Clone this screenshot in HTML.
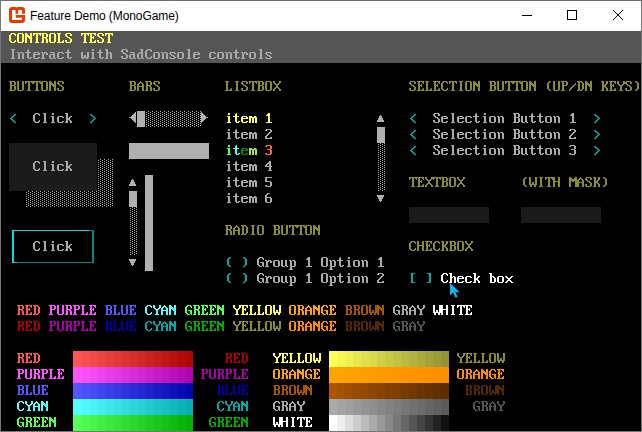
<!DOCTYPE html>
<html><head><meta charset="utf-8"><style>
html,body{margin:0;padding:0;background:#fff;}
body{width:642px;height:432px;position:relative;overflow:hidden;}
#win{position:absolute;left:0;top:0;width:640px;height:430px;border:1px solid #777;border-top-color:#6e6e6e;background:#fff;}
#title{position:absolute;left:30px;top:9px;font-family:"Liberation Sans",sans-serif;font-size:12px;letter-spacing:-0.09px;color:#000;white-space:nowrap;line-height:14px;}
#con{position:absolute;left:1px;top:31px;width:640px;height:400px;background:#000;}
svg{display:block;}
</style></head><body>
<div id="win"></div>
<svg style="position:absolute;left:9px;top:7px" width="16" height="16" viewBox="0 0 16 16">
<path fill="#e73c00" d="M3 0h3.3l1.2 0.4l1.2-0.4h4.3a3 3 0 0 1 3 3v10a3 3 0 0 1-3 3H3a3 3 0 0 1-3-3V3a3 3 0 0 1 3-3z"/>
<path fill="#fff" d="M3 3V13H13V10.7H6.7V8H16V6.7H13V3H9.3V6.7H6.5V3Z"/>
</svg>
<div id="title">Feature Demo (MonoGame)</div>
<svg style="position:absolute;left:0;top:0" width="642" height="31">
<rect x="522" y="15" width="10" height="1" fill="#000"/>
<rect x="567.5" y="10.5" width="9" height="9" fill="none" stroke="#000" stroke-width="1"/>
<path d="M613 10l10 10M623 10l-10 10" stroke="#000" stroke-width="1" fill="none"/>
</svg>
<div id="con">
<svg width="640" height="400" shape-rendering="crispEdges">
<rect x="0" y="0" width="640" height="32" fill="#555555"/>
<rect x="8" y="112" width="88" height="48" fill="#1b1b1b"/>
<rect x="408" y="176" width="80" height="16" fill="#1b1b1b"/>
<rect x="520" y="176" width="80" height="16" fill="#1b1b1b"/>
<rect x="72" y="320" width="8" height="16" fill="#ff5555"/>
<rect x="80" y="320" width="8" height="16" fill="#f94f4f"/>
<rect x="88" y="320" width="8" height="16" fill="#f44a4a"/>
<rect x="96" y="320" width="8" height="16" fill="#ee4444"/>
<rect x="104" y="320" width="8" height="16" fill="#e83e3e"/>
<rect x="112" y="320" width="8" height="16" fill="#e33939"/>
<rect x="120" y="320" width="8" height="16" fill="#dd3333"/>
<rect x="128" y="320" width="8" height="16" fill="#d72d2d"/>
<rect x="136" y="320" width="8" height="16" fill="#d22828"/>
<rect x="144" y="320" width="8" height="16" fill="#cc2222"/>
<rect x="152" y="320" width="8" height="16" fill="#c61c1c"/>
<rect x="160" y="320" width="8" height="16" fill="#c11717"/>
<rect x="168" y="320" width="8" height="16" fill="#bb1111"/>
<rect x="176" y="320" width="8" height="16" fill="#b50b0b"/>
<rect x="184" y="320" width="8" height="16" fill="#b00606"/>
<rect x="72" y="336" width="8" height="16" fill="#ff55ff"/>
<rect x="80" y="336" width="8" height="16" fill="#f94ff9"/>
<rect x="88" y="336" width="8" height="16" fill="#f44af4"/>
<rect x="96" y="336" width="8" height="16" fill="#ee44ee"/>
<rect x="104" y="336" width="8" height="16" fill="#e83ee8"/>
<rect x="112" y="336" width="8" height="16" fill="#e339e3"/>
<rect x="120" y="336" width="8" height="16" fill="#dd33dd"/>
<rect x="128" y="336" width="8" height="16" fill="#d72dd7"/>
<rect x="136" y="336" width="8" height="16" fill="#d228d2"/>
<rect x="144" y="336" width="8" height="16" fill="#cc22cc"/>
<rect x="152" y="336" width="8" height="16" fill="#c61cc6"/>
<rect x="160" y="336" width="8" height="16" fill="#c117c1"/>
<rect x="168" y="336" width="8" height="16" fill="#bb11bb"/>
<rect x="176" y="336" width="8" height="16" fill="#b50bb5"/>
<rect x="184" y="336" width="8" height="16" fill="#b006b0"/>
<rect x="72" y="352" width="8" height="16" fill="#5555ff"/>
<rect x="80" y="352" width="8" height="16" fill="#4f4ff9"/>
<rect x="88" y="352" width="8" height="16" fill="#4a4af4"/>
<rect x="96" y="352" width="8" height="16" fill="#4444ee"/>
<rect x="104" y="352" width="8" height="16" fill="#3e3ee8"/>
<rect x="112" y="352" width="8" height="16" fill="#3939e3"/>
<rect x="120" y="352" width="8" height="16" fill="#3333dd"/>
<rect x="128" y="352" width="8" height="16" fill="#2d2dd7"/>
<rect x="136" y="352" width="8" height="16" fill="#2828d2"/>
<rect x="144" y="352" width="8" height="16" fill="#2222cc"/>
<rect x="152" y="352" width="8" height="16" fill="#1c1cc6"/>
<rect x="160" y="352" width="8" height="16" fill="#1717c1"/>
<rect x="168" y="352" width="8" height="16" fill="#1111bb"/>
<rect x="176" y="352" width="8" height="16" fill="#0b0bb5"/>
<rect x="184" y="352" width="8" height="16" fill="#0606b0"/>
<rect x="72" y="368" width="8" height="16" fill="#55ffff"/>
<rect x="80" y="368" width="8" height="16" fill="#4ff9f9"/>
<rect x="88" y="368" width="8" height="16" fill="#4af4f4"/>
<rect x="96" y="368" width="8" height="16" fill="#44eeee"/>
<rect x="104" y="368" width="8" height="16" fill="#3ee8e8"/>
<rect x="112" y="368" width="8" height="16" fill="#39e3e3"/>
<rect x="120" y="368" width="8" height="16" fill="#33dddd"/>
<rect x="128" y="368" width="8" height="16" fill="#2dd7d7"/>
<rect x="136" y="368" width="8" height="16" fill="#28d2d2"/>
<rect x="144" y="368" width="8" height="16" fill="#22cccc"/>
<rect x="152" y="368" width="8" height="16" fill="#1cc6c6"/>
<rect x="160" y="368" width="8" height="16" fill="#17c1c1"/>
<rect x="168" y="368" width="8" height="16" fill="#11bbbb"/>
<rect x="176" y="368" width="8" height="16" fill="#0bb5b5"/>
<rect x="184" y="368" width="8" height="16" fill="#06b0b0"/>
<rect x="72" y="384" width="8" height="16" fill="#55ff55"/>
<rect x="80" y="384" width="8" height="16" fill="#4ff94f"/>
<rect x="88" y="384" width="8" height="16" fill="#4af44a"/>
<rect x="96" y="384" width="8" height="16" fill="#44ee44"/>
<rect x="104" y="384" width="8" height="16" fill="#3ee83e"/>
<rect x="112" y="384" width="8" height="16" fill="#39e339"/>
<rect x="120" y="384" width="8" height="16" fill="#33dd33"/>
<rect x="128" y="384" width="8" height="16" fill="#2dd72d"/>
<rect x="136" y="384" width="8" height="16" fill="#28d228"/>
<rect x="144" y="384" width="8" height="16" fill="#22cc22"/>
<rect x="152" y="384" width="8" height="16" fill="#1cc61c"/>
<rect x="160" y="384" width="8" height="16" fill="#17c117"/>
<rect x="168" y="384" width="8" height="16" fill="#11bb11"/>
<rect x="176" y="384" width="8" height="16" fill="#0bb50b"/>
<rect x="184" y="384" width="8" height="16" fill="#06b006"/>
<rect x="328" y="320" width="8" height="16" fill="#ffff55"/>
<rect x="336" y="320" width="8" height="16" fill="#f7f753"/>
<rect x="344" y="320" width="8" height="16" fill="#f0f050"/>
<rect x="352" y="320" width="8" height="16" fill="#e8e84e"/>
<rect x="360" y="320" width="8" height="16" fill="#e0e04c"/>
<rect x="368" y="320" width="8" height="16" fill="#d9d949"/>
<rect x="376" y="320" width="8" height="16" fill="#d1d147"/>
<rect x="384" y="320" width="8" height="16" fill="#c9c945"/>
<rect x="392" y="320" width="8" height="16" fill="#c2c242"/>
<rect x="400" y="320" width="8" height="16" fill="#baba40"/>
<rect x="408" y="320" width="8" height="16" fill="#b2b23e"/>
<rect x="416" y="320" width="8" height="16" fill="#abab3b"/>
<rect x="424" y="320" width="8" height="16" fill="#a3a339"/>
<rect x="432" y="320" width="8" height="16" fill="#9b9b37"/>
<rect x="440" y="320" width="8" height="16" fill="#949434"/>
<rect x="328" y="336" width="8" height="16" fill="#ffa500"/>
<rect x="336" y="336" width="8" height="16" fill="#ffa300"/>
<rect x="344" y="336" width="8" height="16" fill="#ffa200"/>
<rect x="352" y="336" width="8" height="16" fill="#ffa000"/>
<rect x="360" y="336" width="8" height="16" fill="#ff9e00"/>
<rect x="368" y="336" width="8" height="16" fill="#ff9d00"/>
<rect x="376" y="336" width="8" height="16" fill="#ff9b00"/>
<rect x="384" y="336" width="8" height="16" fill="#ff9900"/>
<rect x="392" y="336" width="8" height="16" fill="#ff9800"/>
<rect x="400" y="336" width="8" height="16" fill="#ff9600"/>
<rect x="408" y="336" width="8" height="16" fill="#ff9400"/>
<rect x="416" y="336" width="8" height="16" fill="#ff9300"/>
<rect x="424" y="336" width="8" height="16" fill="#ff9100"/>
<rect x="432" y="336" width="8" height="16" fill="#ff8f00"/>
<rect x="440" y="336" width="8" height="16" fill="#ff8e00"/>
<rect x="328" y="352" width="8" height="16" fill="#aa5500"/>
<rect x="336" y="352" width="8" height="16" fill="#a45200"/>
<rect x="344" y="352" width="8" height="16" fill="#9f4f00"/>
<rect x="352" y="352" width="8" height="16" fill="#994c00"/>
<rect x="360" y="352" width="8" height="16" fill="#934a00"/>
<rect x="368" y="352" width="8" height="16" fill="#8e4700"/>
<rect x="376" y="352" width="8" height="16" fill="#884400"/>
<rect x="384" y="352" width="8" height="16" fill="#824100"/>
<rect x="392" y="352" width="8" height="16" fill="#7d3e00"/>
<rect x="400" y="352" width="8" height="16" fill="#773b00"/>
<rect x="408" y="352" width="8" height="16" fill="#713800"/>
<rect x="416" y="352" width="8" height="16" fill="#6c3500"/>
<rect x="424" y="352" width="8" height="16" fill="#663300"/>
<rect x="432" y="352" width="8" height="16" fill="#603000"/>
<rect x="440" y="352" width="8" height="16" fill="#5b2d00"/>
<rect x="328" y="368" width="8" height="16" fill="#aaaaaa"/>
<rect x="336" y="368" width="8" height="16" fill="#a4a4a4"/>
<rect x="344" y="368" width="8" height="16" fill="#9f9f9f"/>
<rect x="352" y="368" width="8" height="16" fill="#999999"/>
<rect x="360" y="368" width="8" height="16" fill="#939393"/>
<rect x="368" y="368" width="8" height="16" fill="#8e8e8e"/>
<rect x="376" y="368" width="8" height="16" fill="#888888"/>
<rect x="384" y="368" width="8" height="16" fill="#828282"/>
<rect x="392" y="368" width="8" height="16" fill="#7d7d7d"/>
<rect x="400" y="368" width="8" height="16" fill="#777777"/>
<rect x="408" y="368" width="8" height="16" fill="#717171"/>
<rect x="416" y="368" width="8" height="16" fill="#6c6c6c"/>
<rect x="424" y="368" width="8" height="16" fill="#666666"/>
<rect x="432" y="368" width="8" height="16" fill="#606060"/>
<rect x="440" y="368" width="8" height="16" fill="#5b5b5b"/>
<rect x="328" y="384" width="8" height="16" fill="#ffffff"/>
<rect x="336" y="384" width="8" height="16" fill="#eeeeee"/>
<rect x="344" y="384" width="8" height="16" fill="#dddddd"/>
<rect x="352" y="384" width="8" height="16" fill="#cccccc"/>
<rect x="360" y="384" width="8" height="16" fill="#bbbbbb"/>
<rect x="368" y="384" width="8" height="16" fill="#aaaaaa"/>
<rect x="376" y="384" width="8" height="16" fill="#999999"/>
<rect x="384" y="384" width="8" height="16" fill="#888888"/>
<rect x="392" y="384" width="8" height="16" fill="#777777"/>
<rect x="400" y="384" width="8" height="16" fill="#666666"/>
<rect x="408" y="384" width="8" height="16" fill="#555555"/>
<rect x="416" y="384" width="8" height="16" fill="#444444"/>
<rect x="424" y="384" width="8" height="16" fill="#333333"/>
<rect x="432" y="384" width="8" height="16" fill="#222222"/>
<rect x="440" y="384" width="8" height="16" fill="#111111"/>
<path fill="#ffff55" d="M10 2h4v1h-4zM9 3h2v1h-2zM13 3h2v1h-2zM14 4h1v1h-1zM8 4h2v6h-2zM14 9h1v1h-1zM9 10h2v1h-2zM13 10h2v1h-2zM10 11h4v1h-4zM17 2h5v1h-5zM16 3h2v8h-2zM21 3h2v8h-2zM17 11h5v1h-5zM24 2h2v1h-2zM24 3h3v1h-3zM29 2h2v3h-2zM24 4h4v1h-4zM24 5h7v1h-7zM27 6h4v1h-4zM28 7h3v1h-3zM24 6h2v6h-2zM29 8h2v4h-2zM32 2h8v1h-8zM32 3h2v1h-2zM38 3h2v1h-2zM32 4h1v1h-1zM39 4h1v1h-1zM35 3h2v8h-2zM34 11h4v1h-4zM40 2h6v1h-6zM41 3h2v3h-2zM45 3h2v3h-2zM41 6h5v1h-5zM44 7h2v1h-2zM41 7h2v4h-2zM45 8h2v4h-2zM40 11h3v1h-3zM49 2h5v1h-5zM48 3h2v8h-2zM53 3h2v8h-2zM49 11h5v1h-5zM56 2h4v1h-4zM62 9h1v1h-1zM57 3h2v8h-2zM61 10h2v1h-2zM56 11h7v1h-7zM65 2h5v1h-5zM64 3h2v2h-2zM69 3h2v2h-2zM65 5h2v1h-2zM66 6h3v1h-3zM68 7h2v1h-2zM69 8h2v3h-2zM64 9h2v2h-2zM65 11h5v1h-5zM80 2h8v1h-8zM80 3h2v1h-2zM86 3h2v1h-2zM80 4h1v1h-1zM87 4h1v1h-1zM83 3h2v8h-2zM82 11h4v1h-4zM88 2h7v1h-7zM93 3h2v1h-2zM94 4h1v1h-1zM89 3h2v3h-2zM92 5h1v1h-1zM89 6h4v1h-4zM92 7h1v1h-1zM94 9h1v1h-1zM89 7h2v4h-2zM93 10h2v1h-2zM88 11h7v1h-7zM97 2h5v1h-5zM96 3h2v2h-2zM101 3h2v2h-2zM97 5h2v1h-2zM98 6h3v1h-3zM100 7h2v1h-2zM101 8h2v3h-2zM96 9h2v2h-2zM97 11h5v1h-5zM104 2h8v1h-8zM104 3h2v1h-2zM110 3h2v1h-2zM104 4h1v1h-1zM111 4h1v1h-1zM107 3h2v8h-2zM106 11h4v1h-4zM227 82h2v2h-2zM226 85h3v1h-3zM227 86h2v5h-2zM226 91h4v1h-4zM235 82h1v1h-1zM234 83h2v2h-2zM232 85h6v1h-6zM234 86h2v5h-2zM237 90h2v1h-2zM235 91h3v1h-3zM241 85h5v1h-5zM240 86h2v1h-2zM245 86h2v1h-2zM240 87h7v1h-7zM240 88h2v3h-2zM245 90h2v1h-2zM241 91h5v1h-5zM248 85h3v1h-3zM253 85h2v1h-2zM248 86h8v1h-8zM248 87h2v5h-2zM254 87h2v5h-2zM251 87h2v5h-2zM267 82h2v1h-2zM266 83h3v1h-3zM265 84h4v1h-4zM267 85h2v6h-2zM265 91h6v1h-6zM232 274h2v3h-2zM238 274h2v3h-2zM233 277h2v1h-2zM237 277h2v1h-2zM234 278h4v1h-4zM235 279h2v4h-2zM234 283h4v1h-4zM240 274h7v1h-7zM245 275h2v1h-2zM246 276h1v1h-1zM241 275h2v3h-2zM244 277h1v1h-1zM241 278h4v1h-4zM244 279h1v1h-1zM246 281h1v1h-1zM241 279h2v4h-2zM245 282h2v1h-2zM240 283h7v1h-7zM248 274h4v1h-4zM254 281h1v1h-1zM249 275h2v8h-2zM253 282h2v1h-2zM248 283h7v1h-7zM256 274h4v1h-4zM262 281h1v1h-1zM257 275h2v8h-2zM261 282h2v1h-2zM256 283h7v1h-7zM265 274h5v1h-5zM264 275h2v8h-2zM269 275h2v8h-2zM265 283h5v1h-5zM272 274h2v7h-2zM278 274h2v7h-2zM275 279h2v2h-2zM272 281h8v1h-8zM273 282h2v2h-2zM277 282h2v2h-2zM272 322h2v3h-2zM278 322h2v3h-2zM273 325h2v1h-2zM277 325h2v1h-2zM274 326h4v1h-4zM275 327h2v4h-2zM274 331h4v1h-4zM280 322h7v1h-7zM285 323h2v1h-2zM286 324h1v1h-1zM281 323h2v3h-2zM284 325h1v1h-1zM281 326h4v1h-4zM284 327h1v1h-1zM286 329h1v1h-1zM281 327h2v4h-2zM285 330h2v1h-2zM280 331h7v1h-7zM288 322h4v1h-4zM294 329h1v1h-1zM289 323h2v8h-2zM293 330h2v1h-2zM288 331h7v1h-7zM296 322h4v1h-4zM302 329h1v1h-1zM297 323h2v8h-2zM301 330h2v1h-2zM296 331h7v1h-7zM305 322h5v1h-5zM304 323h2v8h-2zM309 323h2v8h-2zM305 331h5v1h-5zM312 322h2v7h-2zM318 322h2v7h-2zM315 327h2v2h-2zM312 329h8v1h-8zM313 330h2v2h-2zM317 330h2v2h-2z"/>
<path fill="#aaaaaa" d="M10 18h4v1h-4zM11 19h2v8h-2zM10 27h4v1h-4zM16 21h2v1h-2zM19 21h3v1h-3zM17 22h2v6h-2zM21 22h2v6h-2zM27 18h1v1h-1zM26 19h2v2h-2zM24 21h6v1h-6zM26 22h2v5h-2zM29 26h2v1h-2zM27 27h3v1h-3zM33 21h5v1h-5zM32 22h2v1h-2zM37 22h2v1h-2zM32 23h7v1h-7zM32 24h2v3h-2zM37 26h2v1h-2zM33 27h5v1h-5zM40 21h2v1h-2zM43 21h3v1h-3zM41 22h3v1h-3zM45 22h2v2h-2zM41 23h2v4h-2zM40 27h4v1h-4zM49 21h4v1h-4zM52 22h2v1h-2zM49 23h5v1h-5zM48 24h2v3h-2zM52 24h2v3h-2zM49 27h3v1h-3zM53 27h2v1h-2zM57 21h5v1h-5zM61 22h2v1h-2zM56 22h2v5h-2zM61 26h2v1h-2zM57 27h5v1h-5zM67 18h1v1h-1zM66 19h2v2h-2zM64 21h6v1h-6zM66 22h2v5h-2zM69 26h2v1h-2zM67 27h3v1h-3zM80 21h2v5h-2zM86 21h2v5h-2zM83 24h2v2h-2zM80 26h8v1h-8zM81 27h2v1h-2zM85 27h2v1h-2zM91 18h2v2h-2zM90 21h3v1h-3zM91 22h2v5h-2zM90 27h4v1h-4zM99 18h1v1h-1zM98 19h2v2h-2zM96 21h6v1h-6zM98 22h2v5h-2zM101 26h2v1h-2zM99 27h3v1h-3zM104 18h3v1h-3zM105 19h2v3h-2zM108 21h2v1h-2zM105 22h3v1h-3zM105 23h2v4h-2zM109 22h2v6h-2zM104 27h3v1h-3zM121 18h5v1h-5zM120 19h2v2h-2zM125 19h2v2h-2zM121 21h2v1h-2zM122 22h3v1h-3zM124 23h2v1h-2zM125 24h2v3h-2zM120 25h2v2h-2zM121 27h5v1h-5zM129 21h4v1h-4zM132 22h2v1h-2zM129 23h5v1h-5zM128 24h2v3h-2zM132 24h2v3h-2zM129 27h3v1h-3zM133 27h2v1h-2zM139 18h3v1h-3zM140 19h2v2h-2zM138 21h4v1h-4zM137 22h2v1h-2zM140 22h2v5h-2zM136 23h2v4h-2zM137 27h3v1h-3zM141 27h2v1h-2zM146 18h4v1h-4zM145 19h2v1h-2zM149 19h2v1h-2zM150 20h1v1h-1zM144 20h2v6h-2zM150 25h1v1h-1zM145 26h2v1h-2zM149 26h2v1h-2zM146 27h4v1h-4zM153 21h5v1h-5zM152 22h2v5h-2zM157 22h2v5h-2zM153 27h5v1h-5zM160 21h2v1h-2zM163 21h3v1h-3zM161 22h2v6h-2zM165 22h2v6h-2zM169 21h5v1h-5zM168 22h2v1h-2zM173 22h2v1h-2zM169 23h2v1h-2zM170 24h3v1h-3zM172 25h2v1h-2zM168 26h2v1h-2zM173 26h2v1h-2zM169 27h5v1h-5zM177 21h5v1h-5zM176 22h2v5h-2zM181 22h2v5h-2zM177 27h5v1h-5zM186 18h3v1h-3zM187 19h2v8h-2zM186 27h4v1h-4zM193 21h5v1h-5zM192 22h2v1h-2zM197 22h2v1h-2zM192 23h7v1h-7zM192 24h2v3h-2zM197 26h2v1h-2zM193 27h5v1h-5zM209 21h5v1h-5zM213 22h2v1h-2zM208 22h2v5h-2zM213 26h2v1h-2zM209 27h5v1h-5zM217 21h5v1h-5zM216 22h2v5h-2zM221 22h2v5h-2zM217 27h5v1h-5zM224 21h2v1h-2zM227 21h3v1h-3zM225 22h2v6h-2zM229 22h2v6h-2zM235 18h1v1h-1zM234 19h2v2h-2zM232 21h6v1h-6zM234 22h2v5h-2zM237 26h2v1h-2zM235 27h3v1h-3zM240 21h2v1h-2zM243 21h3v1h-3zM241 22h3v1h-3zM245 22h2v2h-2zM241 23h2v4h-2zM240 27h4v1h-4zM249 21h5v1h-5zM248 22h2v5h-2zM253 22h2v5h-2zM249 27h5v1h-5zM258 18h3v1h-3zM259 19h2v8h-2zM258 27h4v1h-4zM265 21h5v1h-5zM264 22h2v1h-2zM269 22h2v1h-2zM265 23h2v1h-2zM266 24h3v1h-3zM268 25h2v1h-2zM264 26h2v1h-2zM269 26h2v1h-2zM265 27h5v1h-5zM34 82h4v1h-4zM33 83h2v1h-2zM37 83h2v1h-2zM38 84h1v1h-1zM32 84h2v6h-2zM38 89h1v1h-1zM33 90h2v1h-2zM37 90h2v1h-2zM34 91h4v1h-4zM42 82h3v1h-3zM43 83h2v8h-2zM42 91h4v1h-4zM51 82h2v2h-2zM50 85h3v1h-3zM51 86h2v5h-2zM50 91h4v1h-4zM57 85h5v1h-5zM61 86h2v1h-2zM56 86h2v5h-2zM61 90h2v1h-2zM57 91h5v1h-5zM64 82h3v1h-3zM69 85h2v1h-2zM65 83h2v4h-2zM68 86h2v1h-2zM65 87h4v2h-4zM68 89h2v1h-2zM65 89h2v2h-2zM69 90h2v2h-2zM64 91h3v1h-3zM34 130h4v1h-4zM33 131h2v1h-2zM37 131h2v1h-2zM38 132h1v1h-1zM32 132h2v6h-2zM38 137h1v1h-1zM33 138h2v1h-2zM37 138h2v1h-2zM34 139h4v1h-4zM42 130h3v1h-3zM43 131h2v8h-2zM42 139h4v1h-4zM51 130h2v2h-2zM50 133h3v1h-3zM51 134h2v5h-2zM50 139h4v1h-4zM57 133h5v1h-5zM61 134h2v1h-2zM56 134h2v5h-2zM61 138h2v1h-2zM57 139h5v1h-5zM64 130h3v1h-3zM69 133h2v1h-2zM65 131h2v4h-2zM68 134h2v1h-2zM65 135h4v2h-4zM68 137h2v1h-2zM65 137h2v2h-2zM69 138h2v2h-2zM64 139h3v1h-3zM99 128h1v1h-1zM103 128h1v1h-1zM97 129h1v1h-1zM101 129h1v1h-1zM99 130h1v1h-1zM103 130h1v1h-1zM97 131h1v1h-1zM101 131h1v1h-1zM99 132h1v1h-1zM103 132h1v1h-1zM97 133h1v1h-1zM101 133h1v1h-1zM99 134h1v1h-1zM103 134h1v1h-1zM97 135h1v1h-1zM101 135h1v1h-1zM99 136h1v1h-1zM103 136h1v1h-1zM97 137h1v1h-1zM101 137h1v1h-1zM99 138h1v1h-1zM103 138h1v1h-1zM97 139h1v1h-1zM101 139h1v1h-1zM99 140h1v1h-1zM103 140h1v1h-1zM97 141h1v1h-1zM101 141h1v1h-1zM99 142h1v1h-1zM103 142h1v1h-1zM97 143h1v1h-1zM101 143h1v1h-1zM107 128h1v1h-1zM111 128h1v1h-1zM105 129h1v1h-1zM109 129h1v1h-1zM107 130h1v1h-1zM111 130h1v1h-1zM105 131h1v1h-1zM109 131h1v1h-1zM107 132h1v1h-1zM111 132h1v1h-1zM105 133h1v1h-1zM109 133h1v1h-1zM107 134h1v1h-1zM111 134h1v1h-1zM105 135h1v1h-1zM109 135h1v1h-1zM107 136h1v1h-1zM111 136h1v1h-1zM105 137h1v1h-1zM109 137h1v1h-1zM107 138h1v1h-1zM111 138h1v1h-1zM105 139h1v1h-1zM109 139h1v1h-1zM107 140h1v1h-1zM111 140h1v1h-1zM105 141h1v1h-1zM109 141h1v1h-1zM107 142h1v1h-1zM111 142h1v1h-1zM105 143h1v1h-1zM109 143h1v1h-1zM99 144h1v1h-1zM103 144h1v1h-1zM97 145h1v1h-1zM101 145h1v1h-1zM99 146h1v1h-1zM103 146h1v1h-1zM97 147h1v1h-1zM101 147h1v1h-1zM99 148h1v1h-1zM103 148h1v1h-1zM97 149h1v1h-1zM101 149h1v1h-1zM99 150h1v1h-1zM103 150h1v1h-1zM97 151h1v1h-1zM101 151h1v1h-1zM99 152h1v1h-1zM103 152h1v1h-1zM97 153h1v1h-1zM101 153h1v1h-1zM99 154h1v1h-1zM103 154h1v1h-1zM97 155h1v1h-1zM101 155h1v1h-1zM99 156h1v1h-1zM103 156h1v1h-1zM97 157h1v1h-1zM101 157h1v1h-1zM99 158h1v1h-1zM103 158h1v1h-1zM97 159h1v1h-1zM101 159h1v1h-1zM107 144h1v1h-1zM111 144h1v1h-1zM105 145h1v1h-1zM109 145h1v1h-1zM107 146h1v1h-1zM111 146h1v1h-1zM105 147h1v1h-1zM109 147h1v1h-1zM107 148h1v1h-1zM111 148h1v1h-1zM105 149h1v1h-1zM109 149h1v1h-1zM107 150h1v1h-1zM111 150h1v1h-1zM105 151h1v1h-1zM109 151h1v1h-1zM107 152h1v1h-1zM111 152h1v1h-1zM105 153h1v1h-1zM109 153h1v1h-1zM107 154h1v1h-1zM111 154h1v1h-1zM105 155h1v1h-1zM109 155h1v1h-1zM107 156h1v1h-1zM111 156h1v1h-1zM105 157h1v1h-1zM109 157h1v1h-1zM107 158h1v1h-1zM111 158h1v1h-1zM105 159h1v1h-1zM109 159h1v1h-1zM99 160h1v1h-1zM103 160h1v1h-1zM97 161h1v1h-1zM101 161h1v1h-1zM99 162h1v1h-1zM103 162h1v1h-1zM97 163h1v1h-1zM101 163h1v1h-1zM99 164h1v1h-1zM103 164h1v1h-1zM97 165h1v1h-1zM101 165h1v1h-1zM99 166h1v1h-1zM103 166h1v1h-1zM97 167h1v1h-1zM101 167h1v1h-1zM99 168h1v1h-1zM103 168h1v1h-1zM97 169h1v1h-1zM101 169h1v1h-1zM99 170h1v1h-1zM103 170h1v1h-1zM97 171h1v1h-1zM101 171h1v1h-1zM99 172h1v1h-1zM103 172h1v1h-1zM97 173h1v1h-1zM101 173h1v1h-1zM99 174h1v1h-1zM103 174h1v1h-1zM97 175h1v1h-1zM101 175h1v1h-1zM107 160h1v1h-1zM111 160h1v1h-1zM105 161h1v1h-1zM109 161h1v1h-1zM107 162h1v1h-1zM111 162h1v1h-1zM105 163h1v1h-1zM109 163h1v1h-1zM107 164h1v1h-1zM111 164h1v1h-1zM105 165h1v1h-1zM109 165h1v1h-1zM107 166h1v1h-1zM111 166h1v1h-1zM105 167h1v1h-1zM109 167h1v1h-1zM107 168h1v1h-1zM111 168h1v1h-1zM105 169h1v1h-1zM109 169h1v1h-1zM107 170h1v1h-1zM111 170h1v1h-1zM105 171h1v1h-1zM109 171h1v1h-1zM107 172h1v1h-1zM111 172h1v1h-1zM105 173h1v1h-1zM109 173h1v1h-1zM107 174h1v1h-1zM111 174h1v1h-1zM105 175h1v1h-1zM109 175h1v1h-1zM27 160h1v1h-1zM31 160h1v1h-1zM25 161h1v1h-1zM29 161h1v1h-1zM27 162h1v1h-1zM31 162h1v1h-1zM25 163h1v1h-1zM29 163h1v1h-1zM27 164h1v1h-1zM31 164h1v1h-1zM25 165h1v1h-1zM29 165h1v1h-1zM27 166h1v1h-1zM31 166h1v1h-1zM25 167h1v1h-1zM29 167h1v1h-1zM27 168h1v1h-1zM31 168h1v1h-1zM25 169h1v1h-1zM29 169h1v1h-1zM27 170h1v1h-1zM31 170h1v1h-1zM25 171h1v1h-1zM29 171h1v1h-1zM27 172h1v1h-1zM31 172h1v1h-1zM25 173h1v1h-1zM29 173h1v1h-1zM27 174h1v1h-1zM31 174h1v1h-1zM25 175h1v1h-1zM29 175h1v1h-1zM35 160h1v1h-1zM39 160h1v1h-1zM33 161h1v1h-1zM37 161h1v1h-1zM35 162h1v1h-1zM39 162h1v1h-1zM33 163h1v1h-1zM37 163h1v1h-1zM35 164h1v1h-1zM39 164h1v1h-1zM33 165h1v1h-1zM37 165h1v1h-1zM35 166h1v1h-1zM39 166h1v1h-1zM33 167h1v1h-1zM37 167h1v1h-1zM35 168h1v1h-1zM39 168h1v1h-1zM33 169h1v1h-1zM37 169h1v1h-1zM35 170h1v1h-1zM39 170h1v1h-1zM33 171h1v1h-1zM37 171h1v1h-1zM35 172h1v1h-1zM39 172h1v1h-1zM33 173h1v1h-1zM37 173h1v1h-1zM35 174h1v1h-1zM39 174h1v1h-1zM33 175h1v1h-1zM37 175h1v1h-1zM43 160h1v1h-1zM47 160h1v1h-1zM41 161h1v1h-1zM45 161h1v1h-1zM43 162h1v1h-1zM47 162h1v1h-1zM41 163h1v1h-1zM45 163h1v1h-1zM43 164h1v1h-1zM47 164h1v1h-1zM41 165h1v1h-1zM45 165h1v1h-1zM43 166h1v1h-1zM47 166h1v1h-1zM41 167h1v1h-1zM45 167h1v1h-1zM43 168h1v1h-1zM47 168h1v1h-1zM41 169h1v1h-1zM45 169h1v1h-1zM43 170h1v1h-1zM47 170h1v1h-1zM41 171h1v1h-1zM45 171h1v1h-1zM43 172h1v1h-1zM47 172h1v1h-1zM41 173h1v1h-1zM45 173h1v1h-1zM43 174h1v1h-1zM47 174h1v1h-1zM41 175h1v1h-1zM45 175h1v1h-1zM51 160h1v1h-1zM55 160h1v1h-1zM49 161h1v1h-1zM53 161h1v1h-1zM51 162h1v1h-1zM55 162h1v1h-1zM49 163h1v1h-1zM53 163h1v1h-1zM51 164h1v1h-1zM55 164h1v1h-1zM49 165h1v1h-1zM53 165h1v1h-1zM51 166h1v1h-1zM55 166h1v1h-1zM49 167h1v1h-1zM53 167h1v1h-1zM51 168h1v1h-1zM55 168h1v1h-1zM49 169h1v1h-1zM53 169h1v1h-1zM51 170h1v1h-1zM55 170h1v1h-1zM49 171h1v1h-1zM53 171h1v1h-1zM51 172h1v1h-1zM55 172h1v1h-1zM49 173h1v1h-1zM53 173h1v1h-1zM51 174h1v1h-1zM55 174h1v1h-1zM49 175h1v1h-1zM53 175h1v1h-1zM59 160h1v1h-1zM63 160h1v1h-1zM57 161h1v1h-1zM61 161h1v1h-1zM59 162h1v1h-1zM63 162h1v1h-1zM57 163h1v1h-1zM61 163h1v1h-1zM59 164h1v1h-1zM63 164h1v1h-1zM57 165h1v1h-1zM61 165h1v1h-1zM59 166h1v1h-1zM63 166h1v1h-1zM57 167h1v1h-1zM61 167h1v1h-1zM59 168h1v1h-1zM63 168h1v1h-1zM57 169h1v1h-1zM61 169h1v1h-1zM59 170h1v1h-1zM63 170h1v1h-1zM57 171h1v1h-1zM61 171h1v1h-1zM59 172h1v1h-1zM63 172h1v1h-1zM57 173h1v1h-1zM61 173h1v1h-1zM59 174h1v1h-1zM63 174h1v1h-1zM57 175h1v1h-1zM61 175h1v1h-1zM67 160h1v1h-1zM71 160h1v1h-1zM65 161h1v1h-1zM69 161h1v1h-1zM67 162h1v1h-1zM71 162h1v1h-1zM65 163h1v1h-1zM69 163h1v1h-1zM67 164h1v1h-1zM71 164h1v1h-1zM65 165h1v1h-1zM69 165h1v1h-1zM67 166h1v1h-1zM71 166h1v1h-1zM65 167h1v1h-1zM69 167h1v1h-1zM67 168h1v1h-1zM71 168h1v1h-1zM65 169h1v1h-1zM69 169h1v1h-1zM67 170h1v1h-1zM71 170h1v1h-1zM65 171h1v1h-1zM69 171h1v1h-1zM67 172h1v1h-1zM71 172h1v1h-1zM65 173h1v1h-1zM69 173h1v1h-1zM67 174h1v1h-1zM71 174h1v1h-1zM65 175h1v1h-1zM69 175h1v1h-1zM75 160h1v1h-1zM79 160h1v1h-1zM73 161h1v1h-1zM77 161h1v1h-1zM75 162h1v1h-1zM79 162h1v1h-1zM73 163h1v1h-1zM77 163h1v1h-1zM75 164h1v1h-1zM79 164h1v1h-1zM73 165h1v1h-1zM77 165h1v1h-1zM75 166h1v1h-1zM79 166h1v1h-1zM73 167h1v1h-1zM77 167h1v1h-1zM75 168h1v1h-1zM79 168h1v1h-1zM73 169h1v1h-1zM77 169h1v1h-1zM75 170h1v1h-1zM79 170h1v1h-1zM73 171h1v1h-1zM77 171h1v1h-1zM75 172h1v1h-1zM79 172h1v1h-1zM73 173h1v1h-1zM77 173h1v1h-1zM75 174h1v1h-1zM79 174h1v1h-1zM73 175h1v1h-1zM77 175h1v1h-1zM83 160h1v1h-1zM87 160h1v1h-1zM81 161h1v1h-1zM85 161h1v1h-1zM83 162h1v1h-1zM87 162h1v1h-1zM81 163h1v1h-1zM85 163h1v1h-1zM83 164h1v1h-1zM87 164h1v1h-1zM81 165h1v1h-1zM85 165h1v1h-1zM83 166h1v1h-1zM87 166h1v1h-1zM81 167h1v1h-1zM85 167h1v1h-1zM83 168h1v1h-1zM87 168h1v1h-1zM81 169h1v1h-1zM85 169h1v1h-1zM83 170h1v1h-1zM87 170h1v1h-1zM81 171h1v1h-1zM85 171h1v1h-1zM83 172h1v1h-1zM87 172h1v1h-1zM81 173h1v1h-1zM85 173h1v1h-1zM83 174h1v1h-1zM87 174h1v1h-1zM81 175h1v1h-1zM85 175h1v1h-1zM91 160h1v1h-1zM95 160h1v1h-1zM89 161h1v1h-1zM93 161h1v1h-1zM91 162h1v1h-1zM95 162h1v1h-1zM89 163h1v1h-1zM93 163h1v1h-1zM91 164h1v1h-1zM95 164h1v1h-1zM89 165h1v1h-1zM93 165h1v1h-1zM91 166h1v1h-1zM95 166h1v1h-1zM89 167h1v1h-1zM93 167h1v1h-1zM91 168h1v1h-1zM95 168h1v1h-1zM89 169h1v1h-1zM93 169h1v1h-1zM91 170h1v1h-1zM95 170h1v1h-1zM89 171h1v1h-1zM93 171h1v1h-1zM91 172h1v1h-1zM95 172h1v1h-1zM89 173h1v1h-1zM93 173h1v1h-1zM91 174h1v1h-1zM95 174h1v1h-1zM89 175h1v1h-1zM93 175h1v1h-1zM34 210h4v1h-4zM33 211h2v1h-2zM37 211h2v1h-2zM38 212h1v1h-1zM32 212h2v6h-2zM38 217h1v1h-1zM33 218h2v1h-2zM37 218h2v1h-2zM34 219h4v1h-4zM42 210h3v1h-3zM43 211h2v8h-2zM42 219h4v1h-4zM51 210h2v2h-2zM50 213h3v1h-3zM51 214h2v5h-2zM50 219h4v1h-4zM57 213h5v1h-5zM61 214h2v1h-2zM56 214h2v5h-2zM61 218h2v1h-2zM57 219h5v1h-5zM64 210h3v1h-3zM69 213h2v1h-2zM65 211h2v4h-2zM68 214h2v1h-2zM65 215h4v2h-4zM68 217h2v1h-2zM65 217h2v2h-2zM69 218h2v2h-2zM64 219h3v1h-3zM227 98h2v2h-2zM226 101h3v1h-3zM227 102h2v5h-2zM226 107h4v1h-4zM235 98h1v1h-1zM234 99h2v2h-2zM232 101h6v1h-6zM234 102h2v5h-2zM237 106h2v1h-2zM235 107h3v1h-3zM241 101h5v1h-5zM240 102h2v1h-2zM245 102h2v1h-2zM240 103h7v1h-7zM240 104h2v3h-2zM245 106h2v1h-2zM241 107h5v1h-5zM248 101h3v1h-3zM253 101h2v1h-2zM248 102h8v1h-8zM248 103h2v5h-2zM254 103h2v5h-2zM251 103h2v5h-2zM265 98h5v1h-5zM264 99h2v1h-2zM269 99h2v2h-2zM268 101h2v1h-2zM267 102h2v1h-2zM266 103h2v1h-2zM265 104h2v1h-2zM264 105h2v2h-2zM269 106h2v1h-2zM264 107h7v1h-7zM227 130h2v2h-2zM226 133h3v1h-3zM227 134h2v5h-2zM226 139h4v1h-4zM235 130h1v1h-1zM234 131h2v2h-2zM232 133h6v1h-6zM234 134h2v5h-2zM237 138h2v1h-2zM235 139h3v1h-3zM241 133h5v1h-5zM240 134h2v1h-2zM245 134h2v1h-2zM240 135h7v1h-7zM240 136h2v3h-2zM245 138h2v1h-2zM241 139h5v1h-5zM248 133h3v1h-3zM253 133h2v1h-2zM248 134h8v1h-8zM248 135h2v5h-2zM254 135h2v5h-2zM251 135h2v5h-2zM268 130h2v1h-2zM267 131h3v1h-3zM266 132h4v1h-4zM265 133h2v1h-2zM268 133h2v2h-2zM264 134h2v1h-2zM264 135h7v1h-7zM268 136h2v3h-2zM267 139h4v1h-4zM227 146h2v2h-2zM226 149h3v1h-3zM227 150h2v5h-2zM226 155h4v1h-4zM235 146h1v1h-1zM234 147h2v2h-2zM232 149h6v1h-6zM234 150h2v5h-2zM237 154h2v1h-2zM235 155h3v1h-3zM241 149h5v1h-5zM240 150h2v1h-2zM245 150h2v1h-2zM240 151h7v1h-7zM240 152h2v3h-2zM245 154h2v1h-2zM241 155h5v1h-5zM248 149h3v1h-3zM253 149h2v1h-2zM248 150h8v1h-8zM248 151h2v5h-2zM254 151h2v5h-2zM251 151h2v5h-2zM264 146h7v1h-7zM264 147h2v3h-2zM264 150h6v1h-6zM269 151h2v4h-2zM264 154h2v1h-2zM265 155h5v1h-5zM227 162h2v2h-2zM226 165h3v1h-3zM227 166h2v5h-2zM226 171h4v1h-4zM235 162h1v1h-1zM234 163h2v2h-2zM232 165h6v1h-6zM234 166h2v5h-2zM237 170h2v1h-2zM235 171h3v1h-3zM241 165h5v1h-5zM240 166h2v1h-2zM245 166h2v1h-2zM240 167h7v1h-7zM240 168h2v3h-2zM245 170h2v1h-2zM241 171h5v1h-5zM248 165h3v1h-3zM253 165h2v1h-2zM248 166h8v1h-8zM248 167h2v5h-2zM254 167h2v5h-2zM251 167h2v5h-2zM266 162h3v1h-3zM265 163h2v1h-2zM264 164h2v2h-2zM264 166h6v1h-6zM264 167h2v4h-2zM269 167h2v4h-2zM265 171h5v1h-5zM433 82h5v1h-5zM432 83h2v2h-2zM437 83h2v2h-2zM433 85h2v1h-2zM434 86h3v1h-3zM436 87h2v1h-2zM437 88h2v3h-2zM432 89h2v2h-2zM433 91h5v1h-5zM441 85h5v1h-5zM440 86h2v1h-2zM445 86h2v1h-2zM440 87h7v1h-7zM440 88h2v3h-2zM445 90h2v1h-2zM441 91h5v1h-5zM450 82h3v1h-3zM451 83h2v8h-2zM450 91h4v1h-4zM457 85h5v1h-5zM456 86h2v1h-2zM461 86h2v1h-2zM456 87h7v1h-7zM456 88h2v3h-2zM461 90h2v1h-2zM457 91h5v1h-5zM465 85h5v1h-5zM469 86h2v1h-2zM464 86h2v5h-2zM469 90h2v1h-2zM465 91h5v1h-5zM475 82h1v1h-1zM474 83h2v2h-2zM472 85h6v1h-6zM474 86h2v5h-2zM477 90h2v1h-2zM475 91h3v1h-3zM483 82h2v2h-2zM482 85h3v1h-3zM483 86h2v5h-2zM482 91h4v1h-4zM489 85h5v1h-5zM488 86h2v5h-2zM493 86h2v5h-2zM489 91h5v1h-5zM496 85h2v1h-2zM499 85h3v1h-3zM497 86h2v6h-2zM501 86h2v6h-2zM512 82h6v1h-6zM513 83h2v3h-2zM517 83h2v3h-2zM513 86h5v1h-5zM513 87h2v4h-2zM517 87h2v4h-2zM512 91h6v1h-6zM520 85h2v6h-2zM524 85h2v6h-2zM521 91h3v1h-3zM525 91h2v1h-2zM531 82h1v1h-1zM530 83h2v2h-2zM528 85h6v1h-6zM530 86h2v5h-2zM533 90h2v1h-2zM531 91h3v1h-3zM539 82h1v1h-1zM538 83h2v2h-2zM536 85h6v1h-6zM538 86h2v5h-2zM541 90h2v1h-2zM539 91h3v1h-3zM545 85h5v1h-5zM544 86h2v5h-2zM549 86h2v5h-2zM545 91h5v1h-5zM552 85h2v1h-2zM555 85h3v1h-3zM553 86h2v6h-2zM557 86h2v6h-2zM571 82h2v1h-2zM570 83h3v1h-3zM569 84h4v1h-4zM571 85h2v6h-2zM569 91h6v1h-6zM433 98h5v1h-5zM432 99h2v2h-2zM437 99h2v2h-2zM433 101h2v1h-2zM434 102h3v1h-3zM436 103h2v1h-2zM437 104h2v3h-2zM432 105h2v2h-2zM433 107h5v1h-5zM441 101h5v1h-5zM440 102h2v1h-2zM445 102h2v1h-2zM440 103h7v1h-7zM440 104h2v3h-2zM445 106h2v1h-2zM441 107h5v1h-5zM450 98h3v1h-3zM451 99h2v8h-2zM450 107h4v1h-4zM457 101h5v1h-5zM456 102h2v1h-2zM461 102h2v1h-2zM456 103h7v1h-7zM456 104h2v3h-2zM461 106h2v1h-2zM457 107h5v1h-5zM465 101h5v1h-5zM469 102h2v1h-2zM464 102h2v5h-2zM469 106h2v1h-2zM465 107h5v1h-5zM475 98h1v1h-1zM474 99h2v2h-2zM472 101h6v1h-6zM474 102h2v5h-2zM477 106h2v1h-2zM475 107h3v1h-3zM483 98h2v2h-2zM482 101h3v1h-3zM483 102h2v5h-2zM482 107h4v1h-4zM489 101h5v1h-5zM488 102h2v5h-2zM493 102h2v5h-2zM489 107h5v1h-5zM496 101h2v1h-2zM499 101h3v1h-3zM497 102h2v6h-2zM501 102h2v6h-2zM512 98h6v1h-6zM513 99h2v3h-2zM517 99h2v3h-2zM513 102h5v1h-5zM513 103h2v4h-2zM517 103h2v4h-2zM512 107h6v1h-6zM520 101h2v6h-2zM524 101h2v6h-2zM521 107h3v1h-3zM525 107h2v1h-2zM531 98h1v1h-1zM530 99h2v2h-2zM528 101h6v1h-6zM530 102h2v5h-2zM533 106h2v1h-2zM531 107h3v1h-3zM539 98h1v1h-1zM538 99h2v2h-2zM536 101h6v1h-6zM538 102h2v5h-2zM541 106h2v1h-2zM539 107h3v1h-3zM545 101h5v1h-5zM544 102h2v5h-2zM549 102h2v5h-2zM545 107h5v1h-5zM552 101h2v1h-2zM555 101h3v1h-3zM553 102h2v6h-2zM557 102h2v6h-2zM569 98h5v1h-5zM568 99h2v1h-2zM573 99h2v2h-2zM572 101h2v1h-2zM571 102h2v1h-2zM570 103h2v1h-2zM569 104h2v1h-2zM568 105h2v2h-2zM573 106h2v1h-2zM568 107h7v1h-7zM433 114h5v1h-5zM432 115h2v2h-2zM437 115h2v2h-2zM433 117h2v1h-2zM434 118h3v1h-3zM436 119h2v1h-2zM437 120h2v3h-2zM432 121h2v2h-2zM433 123h5v1h-5zM441 117h5v1h-5zM440 118h2v1h-2zM445 118h2v1h-2zM440 119h7v1h-7zM440 120h2v3h-2zM445 122h2v1h-2zM441 123h5v1h-5zM450 114h3v1h-3zM451 115h2v8h-2zM450 123h4v1h-4zM457 117h5v1h-5zM456 118h2v1h-2zM461 118h2v1h-2zM456 119h7v1h-7zM456 120h2v3h-2zM461 122h2v1h-2zM457 123h5v1h-5zM465 117h5v1h-5zM469 118h2v1h-2zM464 118h2v5h-2zM469 122h2v1h-2zM465 123h5v1h-5zM475 114h1v1h-1zM474 115h2v2h-2zM472 117h6v1h-6zM474 118h2v5h-2zM477 122h2v1h-2zM475 123h3v1h-3zM483 114h2v2h-2zM482 117h3v1h-3zM483 118h2v5h-2zM482 123h4v1h-4zM489 117h5v1h-5zM488 118h2v5h-2zM493 118h2v5h-2zM489 123h5v1h-5zM496 117h2v1h-2zM499 117h3v1h-3zM497 118h2v6h-2zM501 118h2v6h-2zM512 114h6v1h-6zM513 115h2v3h-2zM517 115h2v3h-2zM513 118h5v1h-5zM513 119h2v4h-2zM517 119h2v4h-2zM512 123h6v1h-6zM520 117h2v6h-2zM524 117h2v6h-2zM521 123h3v1h-3zM525 123h2v1h-2zM531 114h1v1h-1zM530 115h2v2h-2zM528 117h6v1h-6zM530 118h2v5h-2zM533 122h2v1h-2zM531 123h3v1h-3zM539 114h1v1h-1zM538 115h2v2h-2zM536 117h6v1h-6zM538 118h2v5h-2zM541 122h2v1h-2zM539 123h3v1h-3zM545 117h5v1h-5zM544 118h2v5h-2zM549 118h2v5h-2zM545 123h5v1h-5zM552 117h2v1h-2zM555 117h3v1h-3zM553 118h2v6h-2zM557 118h2v6h-2zM569 114h5v1h-5zM568 115h2v1h-2zM573 115h2v3h-2zM570 118h4v1h-4zM573 119h2v4h-2zM568 122h2v1h-2zM569 123h5v1h-5zM258 226h4v1h-4zM257 227h2v1h-2zM261 227h2v1h-2zM262 228h1v1h-1zM259 231h4v1h-4zM256 228h2v6h-2zM261 232h2v3h-2zM257 234h2v1h-2zM258 235h3v1h-3zM262 235h1v1h-1zM264 229h2v1h-2zM267 229h3v1h-3zM265 230h3v1h-3zM269 230h2v2h-2zM265 231h2v4h-2zM264 235h4v1h-4zM273 229h5v1h-5zM272 230h2v5h-2zM277 230h2v5h-2zM273 235h5v1h-5zM280 229h2v6h-2zM284 229h2v6h-2zM281 235h3v1h-3zM285 235h2v1h-2zM288 229h2v1h-2zM291 229h3v1h-3zM289 230h2v5h-2zM293 230h2v5h-2zM289 235h5v1h-5zM289 236h2v2h-2zM288 238h4v1h-4zM307 226h2v1h-2zM306 227h3v1h-3zM305 228h4v1h-4zM307 229h2v6h-2zM305 235h6v1h-6zM321 226h5v1h-5zM320 227h2v8h-2zM325 227h2v8h-2zM321 235h5v1h-5zM328 229h2v1h-2zM331 229h3v1h-3zM329 230h2v5h-2zM333 230h2v5h-2zM329 235h5v1h-5zM329 236h2v2h-2zM328 238h4v1h-4zM339 226h1v1h-1zM338 227h2v2h-2zM336 229h6v1h-6zM338 230h2v5h-2zM341 234h2v1h-2zM339 235h3v1h-3zM347 226h2v2h-2zM346 229h3v1h-3zM347 230h2v5h-2zM346 235h4v1h-4zM353 229h5v1h-5zM352 230h2v5h-2zM357 230h2v5h-2zM353 235h5v1h-5zM360 229h2v1h-2zM363 229h3v1h-3zM361 230h2v6h-2zM365 230h2v6h-2zM379 226h2v1h-2zM378 227h3v1h-3zM377 228h4v1h-4zM379 229h2v6h-2zM377 235h6v1h-6zM258 242h4v1h-4zM257 243h2v1h-2zM261 243h2v1h-2zM262 244h1v1h-1zM259 247h4v1h-4zM256 244h2v6h-2zM261 248h2v3h-2zM257 250h2v1h-2zM258 251h3v1h-3zM262 251h1v1h-1zM264 245h2v1h-2zM267 245h3v1h-3zM265 246h3v1h-3zM269 246h2v2h-2zM265 247h2v4h-2zM264 251h4v1h-4zM273 245h5v1h-5zM272 246h2v5h-2zM277 246h2v5h-2zM273 251h5v1h-5zM280 245h2v6h-2zM284 245h2v6h-2zM281 251h3v1h-3zM285 251h2v1h-2zM288 245h2v1h-2zM291 245h3v1h-3zM289 246h2v5h-2zM293 246h2v5h-2zM289 251h5v1h-5zM289 252h2v2h-2zM288 254h4v1h-4zM307 242h2v1h-2zM306 243h3v1h-3zM305 244h4v1h-4zM307 245h2v6h-2zM305 251h6v1h-6zM321 242h5v1h-5zM320 243h2v8h-2zM325 243h2v8h-2zM321 251h5v1h-5zM328 245h2v1h-2zM331 245h3v1h-3zM329 246h2v5h-2zM333 246h2v5h-2zM329 251h5v1h-5zM329 252h2v2h-2zM328 254h4v1h-4zM339 242h1v1h-1zM338 243h2v2h-2zM336 245h6v1h-6zM338 246h2v5h-2zM341 250h2v1h-2zM339 251h3v1h-3zM347 242h2v2h-2zM346 245h3v1h-3zM347 246h2v5h-2zM346 251h4v1h-4zM353 245h5v1h-5zM352 246h2v5h-2zM357 246h2v5h-2zM353 251h5v1h-5zM360 245h2v1h-2zM363 245h3v1h-3zM361 246h2v6h-2zM365 246h2v6h-2zM377 242h5v1h-5zM376 243h2v1h-2zM381 243h2v2h-2zM380 245h2v1h-2zM379 246h2v1h-2zM378 247h2v1h-2zM377 248h2v1h-2zM376 249h2v2h-2zM381 250h2v1h-2zM376 251h7v1h-7zM394 274h4v1h-4zM393 275h2v1h-2zM397 275h2v1h-2zM398 276h1v1h-1zM395 279h4v1h-4zM392 276h2v6h-2zM397 280h2v3h-2zM393 282h2v1h-2zM394 283h3v1h-3zM398 283h1v1h-1zM400 274h6v1h-6zM401 275h2v3h-2zM405 275h2v3h-2zM401 278h5v1h-5zM404 279h2v1h-2zM401 279h2v4h-2zM405 280h2v4h-2zM400 283h3v1h-3zM411 274h1v1h-1zM410 275h3v1h-3zM409 276h2v1h-2zM412 276h2v1h-2zM408 277h2v2h-2zM413 277h2v2h-2zM408 279h7v1h-7zM408 280h2v4h-2zM413 280h2v4h-2zM416 274h2v3h-2zM422 274h2v3h-2zM417 277h2v1h-2zM421 277h2v1h-2zM418 278h4v1h-4zM419 279h2v4h-2zM418 283h4v1h-4zM274 370h4v1h-4zM273 371h2v1h-2zM277 371h2v1h-2zM278 372h1v1h-1zM275 375h4v1h-4zM272 372h2v6h-2zM277 376h2v3h-2zM273 378h2v1h-2zM274 379h3v1h-3zM278 379h1v1h-1zM280 370h6v1h-6zM281 371h2v3h-2zM285 371h2v3h-2zM281 374h5v1h-5zM284 375h2v1h-2zM281 375h2v4h-2zM285 376h2v4h-2zM280 379h3v1h-3zM291 370h1v1h-1zM290 371h3v1h-3zM289 372h2v1h-2zM292 372h2v1h-2zM288 373h2v2h-2zM293 373h2v2h-2zM288 375h7v1h-7zM288 376h2v4h-2zM293 376h2v4h-2zM296 370h2v3h-2zM302 370h2v3h-2zM297 373h2v1h-2zM301 373h2v1h-2zM298 374h4v1h-4zM299 375h2v4h-2zM298 379h4v1h-4z"/>
<path fill="#8c8c32" d="M8 50h6v1h-6zM9 51h2v3h-2zM13 51h2v3h-2zM9 54h5v1h-5zM9 55h2v4h-2zM13 55h2v4h-2zM8 59h6v1h-6zM16 50h2v9h-2zM21 50h2v9h-2zM17 59h5v1h-5zM24 50h8v1h-8zM24 51h2v1h-2zM30 51h2v1h-2zM24 52h1v1h-1zM31 52h1v1h-1zM27 51h2v8h-2zM26 59h4v1h-4zM32 50h8v1h-8zM32 51h2v1h-2zM38 51h2v1h-2zM32 52h1v1h-1zM39 52h1v1h-1zM35 51h2v8h-2zM34 59h4v1h-4zM41 50h5v1h-5zM40 51h2v8h-2zM45 51h2v8h-2zM41 59h5v1h-5zM48 50h2v1h-2zM48 51h3v1h-3zM53 50h2v3h-2zM48 52h4v1h-4zM48 53h7v1h-7zM51 54h4v1h-4zM52 55h3v1h-3zM48 54h2v6h-2zM53 56h2v4h-2zM57 50h5v1h-5zM56 51h2v2h-2zM61 51h2v2h-2zM57 53h2v1h-2zM58 54h3v1h-3zM60 55h2v1h-2zM61 56h2v3h-2zM56 57h2v2h-2zM57 59h5v1h-5zM128 50h6v1h-6zM129 51h2v3h-2zM133 51h2v3h-2zM129 54h5v1h-5zM129 55h2v4h-2zM133 55h2v4h-2zM128 59h6v1h-6zM139 50h1v1h-1zM138 51h3v1h-3zM137 52h2v1h-2zM140 52h2v1h-2zM136 53h2v2h-2zM141 53h2v2h-2zM136 55h7v1h-7zM136 56h2v4h-2zM141 56h2v4h-2zM144 50h6v1h-6zM145 51h2v3h-2zM149 51h2v3h-2zM145 54h5v1h-5zM148 55h2v1h-2zM145 55h2v4h-2zM149 56h2v4h-2zM144 59h3v1h-3zM153 50h5v1h-5zM152 51h2v2h-2zM157 51h2v2h-2zM153 53h2v1h-2zM154 54h3v1h-3zM156 55h2v1h-2zM157 56h2v3h-2zM152 57h2v2h-2zM153 59h5v1h-5zM224 50h4v1h-4zM230 57h1v1h-1zM225 51h2v8h-2zM229 58h2v1h-2zM224 59h7v1h-7zM234 50h4v1h-4zM235 51h2v8h-2zM234 59h4v1h-4zM241 50h5v1h-5zM240 51h2v2h-2zM245 51h2v2h-2zM241 53h2v1h-2zM242 54h3v1h-3zM244 55h2v1h-2zM245 56h2v3h-2zM240 57h2v2h-2zM241 59h5v1h-5zM248 50h8v1h-8zM248 51h2v1h-2zM254 51h2v1h-2zM248 52h1v1h-1zM255 52h1v1h-1zM251 51h2v8h-2zM250 59h4v1h-4zM256 50h6v1h-6zM257 51h2v3h-2zM261 51h2v3h-2zM257 54h5v1h-5zM257 55h2v4h-2zM261 55h2v4h-2zM256 59h6v1h-6zM265 50h5v1h-5zM264 51h2v8h-2zM269 51h2v8h-2zM265 59h5v1h-5zM272 50h2v2h-2zM278 50h2v2h-2zM273 52h2v1h-2zM277 52h2v1h-2zM274 53h4v1h-4zM275 54h2v2h-2zM274 56h4v1h-4zM273 57h2v1h-2zM277 57h2v1h-2zM272 58h2v2h-2zM278 58h2v2h-2zM409 50h5v1h-5zM408 51h2v2h-2zM413 51h2v2h-2zM409 53h2v1h-2zM410 54h3v1h-3zM412 55h2v1h-2zM413 56h2v3h-2zM408 57h2v2h-2zM409 59h5v1h-5zM416 50h7v1h-7zM421 51h2v1h-2zM422 52h1v1h-1zM417 51h2v3h-2zM420 53h1v1h-1zM417 54h4v1h-4zM420 55h1v1h-1zM422 57h1v1h-1zM417 55h2v4h-2zM421 58h2v1h-2zM416 59h7v1h-7zM424 50h4v1h-4zM430 57h1v1h-1zM425 51h2v8h-2zM429 58h2v1h-2zM424 59h7v1h-7zM432 50h7v1h-7zM437 51h2v1h-2zM438 52h1v1h-1zM433 51h2v3h-2zM436 53h1v1h-1zM433 54h4v1h-4zM436 55h1v1h-1zM438 57h1v1h-1zM433 55h2v4h-2zM437 58h2v1h-2zM432 59h7v1h-7zM442 50h4v1h-4zM441 51h2v1h-2zM445 51h2v1h-2zM446 52h1v1h-1zM440 52h2v6h-2zM446 57h1v1h-1zM441 58h2v1h-2zM445 58h2v1h-2zM442 59h4v1h-4zM448 50h8v1h-8zM448 51h2v1h-2zM454 51h2v1h-2zM448 52h1v1h-1zM455 52h1v1h-1zM451 51h2v8h-2zM450 59h4v1h-4zM458 50h4v1h-4zM459 51h2v8h-2zM458 59h4v1h-4zM465 50h5v1h-5zM464 51h2v8h-2zM469 51h2v8h-2zM465 59h5v1h-5zM472 50h2v1h-2zM472 51h3v1h-3zM477 50h2v3h-2zM472 52h4v1h-4zM472 53h7v1h-7zM475 54h4v1h-4zM476 55h3v1h-3zM472 54h2v6h-2zM477 56h2v4h-2zM488 50h6v1h-6zM489 51h2v3h-2zM493 51h2v3h-2zM489 54h5v1h-5zM489 55h2v4h-2zM493 55h2v4h-2zM488 59h6v1h-6zM496 50h2v9h-2zM501 50h2v9h-2zM497 59h5v1h-5zM504 50h8v1h-8zM504 51h2v1h-2zM510 51h2v1h-2zM504 52h1v1h-1zM511 52h1v1h-1zM507 51h2v8h-2zM506 59h4v1h-4zM512 50h8v1h-8zM512 51h2v1h-2zM518 51h2v1h-2zM512 52h1v1h-1zM519 52h1v1h-1zM515 51h2v8h-2zM514 59h4v1h-4zM521 50h5v1h-5zM520 51h2v8h-2zM525 51h2v8h-2zM521 59h5v1h-5zM528 50h2v1h-2zM528 51h3v1h-3zM533 50h2v3h-2zM528 52h4v1h-4zM528 53h7v1h-7zM531 54h4v1h-4zM532 55h3v1h-3zM528 54h2v6h-2zM533 56h2v4h-2zM548 50h2v1h-2zM547 51h2v1h-2zM546 52h2v6h-2zM547 58h2v1h-2zM548 59h2v1h-2zM552 50h2v9h-2zM557 50h2v9h-2zM553 59h5v1h-5zM560 50h6v1h-6zM561 51h2v3h-2zM565 51h2v3h-2zM561 54h5v1h-5zM561 55h2v4h-2zM560 59h4v1h-4zM574 52h1v1h-1zM573 53h2v1h-2zM572 54h2v1h-2zM571 55h2v1h-2zM570 56h2v1h-2zM569 57h2v1h-2zM568 58h2v1h-2zM568 59h1v1h-1zM576 50h5v1h-5zM580 51h2v1h-2zM581 52h2v6h-2zM577 51h2v8h-2zM580 58h2v1h-2zM576 59h5v1h-5zM584 50h2v1h-2zM584 51h3v1h-3zM589 50h2v3h-2zM584 52h4v1h-4zM584 53h7v1h-7zM587 54h4v1h-4zM588 55h3v1h-3zM584 54h2v6h-2zM589 56h2v4h-2zM600 50h3v1h-3zM605 50h2v3h-2zM601 51h2v3h-2zM604 53h2v1h-2zM601 54h4v2h-4zM604 56h2v1h-2zM601 56h2v3h-2zM605 57h2v3h-2zM600 59h3v1h-3zM608 50h7v1h-7zM613 51h2v1h-2zM614 52h1v1h-1zM609 51h2v3h-2zM612 53h1v1h-1zM609 54h4v1h-4zM612 55h1v1h-1zM614 57h1v1h-1zM609 55h2v4h-2zM613 58h2v1h-2zM608 59h7v1h-7zM616 50h2v3h-2zM622 50h2v3h-2zM617 53h2v1h-2zM621 53h2v1h-2zM618 54h4v1h-4zM619 55h2v4h-2zM618 59h4v1h-4zM625 50h5v1h-5zM624 51h2v2h-2zM629 51h2v2h-2zM625 53h2v1h-2zM626 54h3v1h-3zM628 55h2v1h-2zM629 56h2v3h-2zM624 57h2v2h-2zM625 59h5v1h-5zM634 50h2v1h-2zM635 51h2v1h-2zM636 52h2v6h-2zM635 58h2v1h-2zM634 59h2v1h-2zM408 146h8v1h-8zM408 147h2v1h-2zM414 147h2v1h-2zM408 148h1v1h-1zM415 148h1v1h-1zM411 147h2v8h-2zM410 155h4v1h-4zM416 146h7v1h-7zM421 147h2v1h-2zM422 148h1v1h-1zM417 147h2v3h-2zM420 149h1v1h-1zM417 150h4v1h-4zM420 151h1v1h-1zM422 153h1v1h-1zM417 151h2v4h-2zM421 154h2v1h-2zM416 155h7v1h-7zM424 146h2v2h-2zM430 146h2v2h-2zM425 148h2v1h-2zM429 148h2v1h-2zM426 149h4v1h-4zM427 150h2v2h-2zM426 152h4v1h-4zM425 153h2v1h-2zM429 153h2v1h-2zM424 154h2v2h-2zM430 154h2v2h-2zM432 146h8v1h-8zM432 147h2v1h-2zM438 147h2v1h-2zM432 148h1v1h-1zM439 148h1v1h-1zM435 147h2v8h-2zM434 155h4v1h-4zM440 146h6v1h-6zM441 147h2v3h-2zM445 147h2v3h-2zM441 150h5v1h-5zM441 151h2v4h-2zM445 151h2v4h-2zM440 155h6v1h-6zM449 146h5v1h-5zM448 147h2v8h-2zM453 147h2v8h-2zM449 155h5v1h-5zM456 146h2v2h-2zM462 146h2v2h-2zM457 148h2v1h-2zM461 148h2v1h-2zM458 149h4v1h-4zM459 150h2v2h-2zM458 152h4v1h-4zM457 153h2v1h-2zM461 153h2v1h-2zM456 154h2v2h-2zM462 154h2v2h-2zM524 146h2v1h-2zM523 147h2v1h-2zM522 148h2v6h-2zM523 154h2v1h-2zM524 155h2v1h-2zM528 146h2v7h-2zM534 146h2v7h-2zM531 151h2v2h-2zM528 153h8v1h-8zM529 154h2v2h-2zM533 154h2v2h-2zM538 146h4v1h-4zM539 147h2v8h-2zM538 155h4v1h-4zM544 146h8v1h-8zM544 147h2v1h-2zM550 147h2v1h-2zM544 148h1v1h-1zM551 148h1v1h-1zM547 147h2v8h-2zM546 155h4v1h-4zM552 146h2v4h-2zM557 146h2v4h-2zM552 150h7v1h-7zM552 151h2v5h-2zM557 151h2v5h-2zM568 146h2v1h-2zM574 146h2v1h-2zM573 147h3v1h-3zM568 147h3v1h-3zM568 148h8v2h-8zM571 150h2v1h-2zM568 150h2v6h-2zM574 150h2v6h-2zM579 146h1v1h-1zM578 147h3v1h-3zM577 148h2v1h-2zM580 148h2v1h-2zM576 149h2v2h-2zM581 149h2v2h-2zM576 151h7v1h-7zM576 152h2v4h-2zM581 152h2v4h-2zM585 146h5v1h-5zM584 147h2v2h-2zM589 147h2v2h-2zM585 149h2v1h-2zM586 150h3v1h-3zM588 151h2v1h-2zM589 152h2v3h-2zM584 153h2v2h-2zM585 155h5v1h-5zM592 146h3v1h-3zM597 146h2v3h-2zM593 147h2v3h-2zM596 149h2v1h-2zM593 150h4v2h-4zM596 152h2v1h-2zM593 152h2v3h-2zM597 153h2v3h-2zM592 155h3v1h-3zM602 146h2v1h-2zM603 147h2v1h-2zM604 148h2v6h-2zM603 154h2v1h-2zM602 155h2v1h-2zM224 194h6v1h-6zM225 195h2v3h-2zM229 195h2v3h-2zM225 198h5v1h-5zM228 199h2v1h-2zM225 199h2v4h-2zM229 200h2v4h-2zM224 203h3v1h-3zM235 194h1v1h-1zM234 195h3v1h-3zM233 196h2v1h-2zM236 196h2v1h-2zM232 197h2v2h-2zM237 197h2v2h-2zM232 199h7v1h-7zM232 200h2v4h-2zM237 200h2v4h-2zM240 194h5v1h-5zM244 195h2v1h-2zM245 196h2v6h-2zM241 195h2v8h-2zM244 202h2v1h-2zM240 203h5v1h-5zM250 194h4v1h-4zM251 195h2v8h-2zM250 203h4v1h-4zM257 194h5v1h-5zM256 195h2v8h-2zM261 195h2v8h-2zM257 203h5v1h-5zM272 194h6v1h-6zM273 195h2v3h-2zM277 195h2v3h-2zM273 198h5v1h-5zM273 199h2v4h-2zM277 199h2v4h-2zM272 203h6v1h-6zM280 194h2v9h-2zM285 194h2v9h-2zM281 203h5v1h-5zM288 194h8v1h-8zM288 195h2v1h-2zM294 195h2v1h-2zM288 196h1v1h-1zM295 196h1v1h-1zM291 195h2v8h-2zM290 203h4v1h-4zM296 194h8v1h-8zM296 195h2v1h-2zM302 195h2v1h-2zM296 196h1v1h-1zM303 196h1v1h-1zM299 195h2v8h-2zM298 203h4v1h-4zM305 194h5v1h-5zM304 195h2v8h-2zM309 195h2v8h-2zM305 203h5v1h-5zM312 194h2v1h-2zM312 195h3v1h-3zM317 194h2v3h-2zM312 196h4v1h-4zM312 197h7v1h-7zM315 198h4v1h-4zM316 199h3v1h-3zM312 198h2v6h-2zM317 200h2v4h-2zM410 210h4v1h-4zM409 211h2v1h-2zM413 211h2v1h-2zM414 212h1v1h-1zM408 212h2v6h-2zM414 217h1v1h-1zM409 218h2v1h-2zM413 218h2v1h-2zM410 219h4v1h-4zM416 210h2v4h-2zM421 210h2v4h-2zM416 214h7v1h-7zM416 215h2v5h-2zM421 215h2v5h-2zM424 210h7v1h-7zM429 211h2v1h-2zM430 212h1v1h-1zM425 211h2v3h-2zM428 213h1v1h-1zM425 214h4v1h-4zM428 215h1v1h-1zM430 217h1v1h-1zM425 215h2v4h-2zM429 218h2v1h-2zM424 219h7v1h-7zM434 210h4v1h-4zM433 211h2v1h-2zM437 211h2v1h-2zM438 212h1v1h-1zM432 212h2v6h-2zM438 217h1v1h-1zM433 218h2v1h-2zM437 218h2v1h-2zM434 219h4v1h-4zM440 210h3v1h-3zM445 210h2v3h-2zM441 211h2v3h-2zM444 213h2v1h-2zM441 214h4v2h-4zM444 216h2v1h-2zM441 216h2v3h-2zM445 217h2v3h-2zM440 219h3v1h-3zM448 210h6v1h-6zM449 211h2v3h-2zM453 211h2v3h-2zM449 214h5v1h-5zM449 215h2v4h-2zM453 215h2v4h-2zM448 219h6v1h-6zM457 210h5v1h-5zM456 211h2v8h-2zM461 211h2v8h-2zM457 219h5v1h-5zM464 210h2v2h-2zM470 210h2v2h-2zM465 212h2v1h-2zM469 212h2v1h-2zM466 213h4v1h-4zM467 214h2v2h-2zM466 216h4v1h-4zM465 217h2v1h-2zM469 217h2v1h-2zM464 218h2v2h-2zM470 218h2v2h-2zM232 290h2v3h-2zM238 290h2v3h-2zM233 293h2v1h-2zM237 293h2v1h-2zM234 294h4v1h-4zM235 295h2v4h-2zM234 299h4v1h-4zM240 290h7v1h-7zM245 291h2v1h-2zM246 292h1v1h-1zM241 291h2v3h-2zM244 293h1v1h-1zM241 294h4v1h-4zM244 295h1v1h-1zM246 297h1v1h-1zM241 295h2v4h-2zM245 298h2v1h-2zM240 299h7v1h-7zM248 290h4v1h-4zM254 297h1v1h-1zM249 291h2v8h-2zM253 298h2v1h-2zM248 299h7v1h-7zM256 290h4v1h-4zM262 297h1v1h-1zM257 291h2v8h-2zM261 298h2v1h-2zM256 299h7v1h-7zM265 290h5v1h-5zM264 291h2v8h-2zM269 291h2v8h-2zM265 299h5v1h-5zM272 290h2v7h-2zM278 290h2v7h-2zM275 295h2v2h-2zM272 297h8v1h-8zM273 298h2v2h-2zM277 298h2v2h-2zM456 322h2v3h-2zM462 322h2v3h-2zM457 325h2v1h-2zM461 325h2v1h-2zM458 326h4v1h-4zM459 327h2v4h-2zM458 331h4v1h-4zM464 322h7v1h-7zM469 323h2v1h-2zM470 324h1v1h-1zM465 323h2v3h-2zM468 325h1v1h-1zM465 326h4v1h-4zM468 327h1v1h-1zM470 329h1v1h-1zM465 327h2v4h-2zM469 330h2v1h-2zM464 331h7v1h-7zM472 322h4v1h-4zM478 329h1v1h-1zM473 323h2v8h-2zM477 330h2v1h-2zM472 331h7v1h-7zM480 322h4v1h-4zM486 329h1v1h-1zM481 323h2v8h-2zM485 330h2v1h-2zM480 331h7v1h-7zM489 322h5v1h-5zM488 323h2v8h-2zM493 323h2v8h-2zM489 331h5v1h-5zM496 322h2v7h-2zM502 322h2v7h-2zM499 327h2v2h-2zM496 329h8v1h-8zM497 330h2v2h-2zM501 330h2v2h-2z"/>
<path fill="#00aaaa" d="M13 83h2v1h-2zM12 84h2v1h-2zM11 85h2v1h-2zM10 86h2v1h-2zM9 87h2v1h-2zM10 88h2v1h-2zM11 89h2v1h-2zM12 90h2v1h-2zM13 91h2v1h-2zM89 83h2v1h-2zM90 84h2v1h-2zM91 85h2v1h-2zM92 86h2v1h-2zM93 87h2v1h-2zM92 88h2v1h-2zM91 89h2v1h-2zM90 90h2v1h-2zM89 91h2v1h-2zM413 83h2v1h-2zM412 84h2v1h-2zM411 85h2v1h-2zM410 86h2v1h-2zM409 87h2v1h-2zM410 88h2v1h-2zM411 89h2v1h-2zM412 90h2v1h-2zM413 91h2v1h-2zM593 83h2v1h-2zM594 84h2v1h-2zM595 85h2v1h-2zM596 86h2v1h-2zM597 87h2v1h-2zM596 88h2v1h-2zM595 89h2v1h-2zM594 90h2v1h-2zM593 91h2v1h-2zM413 99h2v1h-2zM412 100h2v1h-2zM411 101h2v1h-2zM410 102h2v1h-2zM409 103h2v1h-2zM410 104h2v1h-2zM411 105h2v1h-2zM412 106h2v1h-2zM413 107h2v1h-2zM593 99h2v1h-2zM594 100h2v1h-2zM595 101h2v1h-2zM596 102h2v1h-2zM597 103h2v1h-2zM596 104h2v1h-2zM595 105h2v1h-2zM594 106h2v1h-2zM593 107h2v1h-2zM413 115h2v1h-2zM412 116h2v1h-2zM411 117h2v1h-2zM410 118h2v1h-2zM409 119h2v1h-2zM410 120h2v1h-2zM411 121h2v1h-2zM412 122h2v1h-2zM413 123h2v1h-2zM593 115h2v1h-2zM594 116h2v1h-2zM595 117h2v1h-2zM596 118h2v1h-2zM597 119h2v1h-2zM596 120h2v1h-2zM595 121h2v1h-2zM594 122h2v1h-2zM593 123h2v1h-2zM228 226h2v1h-2zM227 227h2v1h-2zM226 228h2v6h-2zM227 234h2v1h-2zM228 235h2v1h-2zM242 226h2v1h-2zM243 227h2v1h-2zM244 228h2v6h-2zM243 234h2v1h-2zM242 235h2v1h-2zM228 242h2v1h-2zM227 243h2v1h-2zM226 244h2v6h-2zM227 250h2v1h-2zM228 251h2v1h-2zM242 242h2v1h-2zM243 243h2v1h-2zM244 244h2v6h-2zM243 250h2v1h-2zM242 251h2v1h-2zM410 242h4v1h-4zM410 243h2v8h-2zM410 251h4v1h-4zM426 242h4v1h-4zM428 243h2v8h-2zM426 251h4v1h-4zM146 290h4v1h-4zM145 291h2v1h-2zM149 291h2v1h-2zM150 292h1v1h-1zM144 292h2v6h-2zM150 297h1v1h-1zM145 298h2v1h-2zM149 298h2v1h-2zM146 299h4v1h-4zM152 290h2v3h-2zM158 290h2v3h-2zM153 293h2v1h-2zM157 293h2v1h-2zM154 294h4v1h-4zM155 295h2v4h-2zM154 299h4v1h-4zM163 290h1v1h-1zM162 291h3v1h-3zM161 292h2v1h-2zM164 292h2v1h-2zM160 293h2v2h-2zM165 293h2v2h-2zM160 295h7v1h-7zM160 296h2v4h-2zM165 296h2v4h-2zM168 290h2v1h-2zM168 291h3v1h-3zM173 290h2v3h-2zM168 292h4v1h-4zM168 293h7v1h-7zM171 294h4v1h-4zM172 295h3v1h-3zM168 294h2v6h-2zM173 296h2v4h-2zM218 370h4v1h-4zM217 371h2v1h-2zM221 371h2v1h-2zM222 372h1v1h-1zM216 372h2v6h-2zM222 377h1v1h-1zM217 378h2v1h-2zM221 378h2v1h-2zM218 379h4v1h-4zM224 370h2v3h-2zM230 370h2v3h-2zM225 373h2v1h-2zM229 373h2v1h-2zM226 374h4v1h-4zM227 375h2v4h-2zM226 379h4v1h-4zM235 370h1v1h-1zM234 371h3v1h-3zM233 372h2v1h-2zM236 372h2v1h-2zM232 373h2v2h-2zM237 373h2v2h-2zM232 375h7v1h-7zM232 376h2v4h-2zM237 376h2v4h-2zM240 370h2v1h-2zM240 371h3v1h-3zM245 370h2v3h-2zM240 372h4v1h-4zM240 373h7v1h-7zM243 374h4v1h-4zM244 375h3v1h-3zM240 374h2v6h-2zM245 376h2v4h-2z"/>
<path fill="#00dcdc" d="M11 199h5v1h-5zM11 200h2v8h-2zM16 199h8v1h-8zM24 199h8v1h-8zM32 199h8v1h-8zM40 199h8v1h-8zM48 199h8v1h-8zM56 199h8v1h-8zM64 199h8v1h-8zM72 199h8v1h-8zM80 199h8v1h-8zM11 208h2v16h-2zM11 224h2v7h-2zM11 231h5v1h-5z"/>
<path fill="#008787" d="M88 199h5v1h-5zM91 200h2v8h-2zM91 208h2v16h-2zM16 231h8v1h-8zM24 231h8v1h-8zM32 231h8v1h-8zM40 231h8v1h-8zM48 231h8v1h-8zM56 231h8v1h-8zM64 231h8v1h-8zM72 231h8v1h-8zM80 231h8v1h-8zM91 224h2v7h-2zM88 231h5v1h-5z"/>
<path fill="#b0b0b0" d="M134 81h1v1h-1zM133 82h2v1h-2zM132 83h3v1h-3zM131 84h4v1h-4zM130 85h5v1h-5zM128 86h7v1h-7zM130 87h5v1h-5zM131 88h4v1h-4zM132 89h3v1h-3zM133 90h2v1h-2zM134 91h1v1h-1zM136 80h8v16h-8zM147 80h1v1h-1zM151 80h1v1h-1zM145 81h1v1h-1zM149 81h1v1h-1zM147 82h1v1h-1zM151 82h1v1h-1zM145 83h1v1h-1zM149 83h1v1h-1zM147 84h1v1h-1zM151 84h1v1h-1zM145 85h1v1h-1zM149 85h1v1h-1zM147 86h1v1h-1zM151 86h1v1h-1zM145 87h1v1h-1zM149 87h1v1h-1zM147 88h1v1h-1zM151 88h1v1h-1zM145 89h1v1h-1zM149 89h1v1h-1zM147 90h1v1h-1zM151 90h1v1h-1zM145 91h1v1h-1zM149 91h1v1h-1zM147 92h1v1h-1zM151 92h1v1h-1zM145 93h1v1h-1zM149 93h1v1h-1zM147 94h1v1h-1zM151 94h1v1h-1zM145 95h1v1h-1zM149 95h1v1h-1zM155 80h1v1h-1zM159 80h1v1h-1zM153 81h1v1h-1zM157 81h1v1h-1zM155 82h1v1h-1zM159 82h1v1h-1zM153 83h1v1h-1zM157 83h1v1h-1zM155 84h1v1h-1zM159 84h1v1h-1zM153 85h1v1h-1zM157 85h1v1h-1zM155 86h1v1h-1zM159 86h1v1h-1zM153 87h1v1h-1zM157 87h1v1h-1zM155 88h1v1h-1zM159 88h1v1h-1zM153 89h1v1h-1zM157 89h1v1h-1zM155 90h1v1h-1zM159 90h1v1h-1zM153 91h1v1h-1zM157 91h1v1h-1zM155 92h1v1h-1zM159 92h1v1h-1zM153 93h1v1h-1zM157 93h1v1h-1zM155 94h1v1h-1zM159 94h1v1h-1zM153 95h1v1h-1zM157 95h1v1h-1zM163 80h1v1h-1zM167 80h1v1h-1zM161 81h1v1h-1zM165 81h1v1h-1zM163 82h1v1h-1zM167 82h1v1h-1zM161 83h1v1h-1zM165 83h1v1h-1zM163 84h1v1h-1zM167 84h1v1h-1zM161 85h1v1h-1zM165 85h1v1h-1zM163 86h1v1h-1zM167 86h1v1h-1zM161 87h1v1h-1zM165 87h1v1h-1zM163 88h1v1h-1zM167 88h1v1h-1zM161 89h1v1h-1zM165 89h1v1h-1zM163 90h1v1h-1zM167 90h1v1h-1zM161 91h1v1h-1zM165 91h1v1h-1zM163 92h1v1h-1zM167 92h1v1h-1zM161 93h1v1h-1zM165 93h1v1h-1zM163 94h1v1h-1zM167 94h1v1h-1zM161 95h1v1h-1zM165 95h1v1h-1zM171 80h1v1h-1zM175 80h1v1h-1zM169 81h1v1h-1zM173 81h1v1h-1zM171 82h1v1h-1zM175 82h1v1h-1zM169 83h1v1h-1zM173 83h1v1h-1zM171 84h1v1h-1zM175 84h1v1h-1zM169 85h1v1h-1zM173 85h1v1h-1zM171 86h1v1h-1zM175 86h1v1h-1zM169 87h1v1h-1zM173 87h1v1h-1zM171 88h1v1h-1zM175 88h1v1h-1zM169 89h1v1h-1zM173 89h1v1h-1zM171 90h1v1h-1zM175 90h1v1h-1zM169 91h1v1h-1zM173 91h1v1h-1zM171 92h1v1h-1zM175 92h1v1h-1zM169 93h1v1h-1zM173 93h1v1h-1zM171 94h1v1h-1zM175 94h1v1h-1zM169 95h1v1h-1zM173 95h1v1h-1zM179 80h1v1h-1zM183 80h1v1h-1zM177 81h1v1h-1zM181 81h1v1h-1zM179 82h1v1h-1zM183 82h1v1h-1zM177 83h1v1h-1zM181 83h1v1h-1zM179 84h1v1h-1zM183 84h1v1h-1zM177 85h1v1h-1zM181 85h1v1h-1zM179 86h1v1h-1zM183 86h1v1h-1zM177 87h1v1h-1zM181 87h1v1h-1zM179 88h1v1h-1zM183 88h1v1h-1zM177 89h1v1h-1zM181 89h1v1h-1zM179 90h1v1h-1zM183 90h1v1h-1zM177 91h1v1h-1zM181 91h1v1h-1zM179 92h1v1h-1zM183 92h1v1h-1zM177 93h1v1h-1zM181 93h1v1h-1zM179 94h1v1h-1zM183 94h1v1h-1zM177 95h1v1h-1zM181 95h1v1h-1zM187 80h1v1h-1zM191 80h1v1h-1zM185 81h1v1h-1zM189 81h1v1h-1zM187 82h1v1h-1zM191 82h1v1h-1zM185 83h1v1h-1zM189 83h1v1h-1zM187 84h1v1h-1zM191 84h1v1h-1zM185 85h1v1h-1zM189 85h1v1h-1zM187 86h1v1h-1zM191 86h1v1h-1zM185 87h1v1h-1zM189 87h1v1h-1zM187 88h1v1h-1zM191 88h1v1h-1zM185 89h1v1h-1zM189 89h1v1h-1zM187 90h1v1h-1zM191 90h1v1h-1zM185 91h1v1h-1zM189 91h1v1h-1zM187 92h1v1h-1zM191 92h1v1h-1zM185 93h1v1h-1zM189 93h1v1h-1zM187 94h1v1h-1zM191 94h1v1h-1zM185 95h1v1h-1zM189 95h1v1h-1zM195 80h1v1h-1zM199 80h1v1h-1zM193 81h1v1h-1zM197 81h1v1h-1zM195 82h1v1h-1zM199 82h1v1h-1zM193 83h1v1h-1zM197 83h1v1h-1zM195 84h1v1h-1zM199 84h1v1h-1zM193 85h1v1h-1zM197 85h1v1h-1zM195 86h1v1h-1zM199 86h1v1h-1zM193 87h1v1h-1zM197 87h1v1h-1zM195 88h1v1h-1zM199 88h1v1h-1zM193 89h1v1h-1zM197 89h1v1h-1zM195 90h1v1h-1zM199 90h1v1h-1zM193 91h1v1h-1zM197 91h1v1h-1zM195 92h1v1h-1zM199 92h1v1h-1zM193 93h1v1h-1zM197 93h1v1h-1zM195 94h1v1h-1zM199 94h1v1h-1zM193 95h1v1h-1zM197 95h1v1h-1zM200 81h1v1h-1zM200 82h2v1h-2zM200 83h3v1h-3zM200 84h4v1h-4zM200 85h5v1h-5zM200 86h7v1h-7zM200 87h5v1h-5zM200 88h4v1h-4zM200 89h3v1h-3zM200 90h2v1h-2zM200 91h1v1h-1zM128 112h8v16h-8zM136 112h8v16h-8zM144 112h8v16h-8zM152 112h8v16h-8zM160 112h8v16h-8zM168 112h8v16h-8zM176 112h8v16h-8zM184 112h8v16h-8zM192 112h8v16h-8zM200 112h8v16h-8zM131 148h1v1h-1zM130 149h3v2h-3zM129 151h5v2h-5zM128 153h7v2h-7zM128 160h8v16h-8zM131 176h1v1h-1zM135 176h1v1h-1zM129 177h1v1h-1zM133 177h1v1h-1zM131 178h1v1h-1zM135 178h1v1h-1zM129 179h1v1h-1zM133 179h1v1h-1zM131 180h1v1h-1zM135 180h1v1h-1zM129 181h1v1h-1zM133 181h1v1h-1zM131 182h1v1h-1zM135 182h1v1h-1zM129 183h1v1h-1zM133 183h1v1h-1zM131 184h1v1h-1zM135 184h1v1h-1zM129 185h1v1h-1zM133 185h1v1h-1zM131 186h1v1h-1zM135 186h1v1h-1zM129 187h1v1h-1zM133 187h1v1h-1zM131 188h1v1h-1zM135 188h1v1h-1zM129 189h1v1h-1zM133 189h1v1h-1zM131 190h1v1h-1zM135 190h1v1h-1zM129 191h1v1h-1zM133 191h1v1h-1zM131 192h1v1h-1zM135 192h1v1h-1zM129 193h1v1h-1zM133 193h1v1h-1zM131 194h1v1h-1zM135 194h1v1h-1zM129 195h1v1h-1zM133 195h1v1h-1zM131 196h1v1h-1zM135 196h1v1h-1zM129 197h1v1h-1zM133 197h1v1h-1zM131 198h1v1h-1zM135 198h1v1h-1zM129 199h1v1h-1zM133 199h1v1h-1zM131 200h1v1h-1zM135 200h1v1h-1zM129 201h1v1h-1zM133 201h1v1h-1zM131 202h1v1h-1zM135 202h1v1h-1zM129 203h1v1h-1zM133 203h1v1h-1zM131 204h1v1h-1zM135 204h1v1h-1zM129 205h1v1h-1zM133 205h1v1h-1zM131 206h1v1h-1zM135 206h1v1h-1zM129 207h1v1h-1zM133 207h1v1h-1zM131 208h1v1h-1zM135 208h1v1h-1zM129 209h1v1h-1zM133 209h1v1h-1zM131 210h1v1h-1zM135 210h1v1h-1zM129 211h1v1h-1zM133 211h1v1h-1zM131 212h1v1h-1zM135 212h1v1h-1zM129 213h1v1h-1zM133 213h1v1h-1zM131 214h1v1h-1zM135 214h1v1h-1zM129 215h1v1h-1zM133 215h1v1h-1zM131 216h1v1h-1zM135 216h1v1h-1zM129 217h1v1h-1zM133 217h1v1h-1zM131 218h1v1h-1zM135 218h1v1h-1zM129 219h1v1h-1zM133 219h1v1h-1zM131 220h1v1h-1zM135 220h1v1h-1zM129 221h1v1h-1zM133 221h1v1h-1zM131 222h1v1h-1zM135 222h1v1h-1zM129 223h1v1h-1zM133 223h1v1h-1zM128 228h7v2h-7zM129 230h5v2h-5zM130 232h3v2h-3zM131 234h1v1h-1zM144 144h8v16h-8zM144 160h8v16h-8zM144 176h8v16h-8zM144 192h8v16h-8zM144 208h8v16h-8zM144 224h8v16h-8zM379 84h1v1h-1zM378 85h3v2h-3zM377 87h5v2h-5zM376 89h7v2h-7zM376 96h8v16h-8zM379 112h1v1h-1zM383 112h1v1h-1zM377 113h1v1h-1zM381 113h1v1h-1zM379 114h1v1h-1zM383 114h1v1h-1zM377 115h1v1h-1zM381 115h1v1h-1zM379 116h1v1h-1zM383 116h1v1h-1zM377 117h1v1h-1zM381 117h1v1h-1zM379 118h1v1h-1zM383 118h1v1h-1zM377 119h1v1h-1zM381 119h1v1h-1zM379 120h1v1h-1zM383 120h1v1h-1zM377 121h1v1h-1zM381 121h1v1h-1zM379 122h1v1h-1zM383 122h1v1h-1zM377 123h1v1h-1zM381 123h1v1h-1zM379 124h1v1h-1zM383 124h1v1h-1zM377 125h1v1h-1zM381 125h1v1h-1zM379 126h1v1h-1zM383 126h1v1h-1zM377 127h1v1h-1zM381 127h1v1h-1zM379 128h1v1h-1zM383 128h1v1h-1zM377 129h1v1h-1zM381 129h1v1h-1zM379 130h1v1h-1zM383 130h1v1h-1zM377 131h1v1h-1zM381 131h1v1h-1zM379 132h1v1h-1zM383 132h1v1h-1zM377 133h1v1h-1zM381 133h1v1h-1zM379 134h1v1h-1zM383 134h1v1h-1zM377 135h1v1h-1zM381 135h1v1h-1zM379 136h1v1h-1zM383 136h1v1h-1zM377 137h1v1h-1zM381 137h1v1h-1zM379 138h1v1h-1zM383 138h1v1h-1zM377 139h1v1h-1zM381 139h1v1h-1zM379 140h1v1h-1zM383 140h1v1h-1zM377 141h1v1h-1zM381 141h1v1h-1zM379 142h1v1h-1zM383 142h1v1h-1zM377 143h1v1h-1zM381 143h1v1h-1zM379 144h1v1h-1zM383 144h1v1h-1zM377 145h1v1h-1zM381 145h1v1h-1zM379 146h1v1h-1zM383 146h1v1h-1zM377 147h1v1h-1zM381 147h1v1h-1zM379 148h1v1h-1zM383 148h1v1h-1zM377 149h1v1h-1zM381 149h1v1h-1zM379 150h1v1h-1zM383 150h1v1h-1zM377 151h1v1h-1zM381 151h1v1h-1zM379 152h1v1h-1zM383 152h1v1h-1zM377 153h1v1h-1zM381 153h1v1h-1zM379 154h1v1h-1zM383 154h1v1h-1zM377 155h1v1h-1zM381 155h1v1h-1zM379 156h1v1h-1zM383 156h1v1h-1zM377 157h1v1h-1zM381 157h1v1h-1zM379 158h1v1h-1zM383 158h1v1h-1zM377 159h1v1h-1zM381 159h1v1h-1zM376 164h7v2h-7zM377 166h5v2h-5zM378 168h3v2h-3zM379 170h1v1h-1z"/>
<path fill="#55ff55" d="M227 114h2v2h-2zM226 117h3v1h-3zM227 118h2v5h-2zM226 123h4v1h-4zM186 274h4v1h-4zM185 275h2v1h-2zM189 275h2v1h-2zM190 276h1v1h-1zM187 279h4v1h-4zM184 276h2v6h-2zM189 280h2v3h-2zM185 282h2v1h-2zM186 283h3v1h-3zM190 283h1v1h-1zM192 274h6v1h-6zM193 275h2v3h-2zM197 275h2v3h-2zM193 278h5v1h-5zM196 279h2v1h-2zM193 279h2v4h-2zM197 280h2v4h-2zM192 283h3v1h-3zM200 274h7v1h-7zM205 275h2v1h-2zM206 276h1v1h-1zM201 275h2v3h-2zM204 277h1v1h-1zM201 278h4v1h-4zM204 279h1v1h-1zM206 281h1v1h-1zM201 279h2v4h-2zM205 282h2v1h-2zM200 283h7v1h-7zM208 274h7v1h-7zM213 275h2v1h-2zM214 276h1v1h-1zM209 275h2v3h-2zM212 277h1v1h-1zM209 278h4v1h-4zM212 279h1v1h-1zM214 281h1v1h-1zM209 279h2v4h-2zM213 282h2v1h-2zM208 283h7v1h-7zM216 274h2v1h-2zM216 275h3v1h-3zM221 274h2v3h-2zM216 276h4v1h-4zM216 277h7v1h-7zM219 278h4v1h-4zM220 279h3v1h-3zM216 278h2v6h-2zM221 280h2v4h-2zM18 386h4v1h-4zM17 387h2v1h-2zM21 387h2v1h-2zM22 388h1v1h-1zM19 391h4v1h-4zM16 388h2v6h-2zM21 392h2v3h-2zM17 394h2v1h-2zM18 395h3v1h-3zM22 395h1v1h-1zM24 386h6v1h-6zM25 387h2v3h-2zM29 387h2v3h-2zM25 390h5v1h-5zM28 391h2v1h-2zM25 391h2v4h-2zM29 392h2v4h-2zM24 395h3v1h-3zM32 386h7v1h-7zM37 387h2v1h-2zM38 388h1v1h-1zM33 387h2v3h-2zM36 389h1v1h-1zM33 390h4v1h-4zM36 391h1v1h-1zM38 393h1v1h-1zM33 391h2v4h-2zM37 394h2v1h-2zM32 395h7v1h-7zM40 386h7v1h-7zM45 387h2v1h-2zM46 388h1v1h-1zM41 387h2v3h-2zM44 389h1v1h-1zM41 390h4v1h-4zM44 391h1v1h-1zM46 393h1v1h-1zM41 391h2v4h-2zM45 394h2v1h-2zM40 395h7v1h-7zM48 386h2v1h-2zM48 387h3v1h-3zM53 386h2v3h-2zM48 388h4v1h-4zM48 389h7v1h-7zM51 390h4v1h-4zM52 391h3v1h-3zM48 390h2v6h-2zM53 392h2v4h-2z"/>
<path fill="#55ffff" d="M235 114h1v1h-1zM234 115h2v2h-2zM232 117h6v1h-6zM234 118h2v5h-2zM237 122h2v1h-2zM235 123h3v1h-3zM146 274h4v1h-4zM145 275h2v1h-2zM149 275h2v1h-2zM150 276h1v1h-1zM144 276h2v6h-2zM150 281h1v1h-1zM145 282h2v1h-2zM149 282h2v1h-2zM146 283h4v1h-4zM152 274h2v3h-2zM158 274h2v3h-2zM153 277h2v1h-2zM157 277h2v1h-2zM154 278h4v1h-4zM155 279h2v4h-2zM154 283h4v1h-4zM163 274h1v1h-1zM162 275h3v1h-3zM161 276h2v1h-2zM164 276h2v1h-2zM160 277h2v2h-2zM165 277h2v2h-2zM160 279h7v1h-7zM160 280h2v4h-2zM165 280h2v4h-2zM168 274h2v1h-2zM168 275h3v1h-3zM173 274h2v3h-2zM168 276h4v1h-4zM168 277h7v1h-7zM171 278h4v1h-4zM172 279h3v1h-3zM168 278h2v6h-2zM173 280h2v4h-2zM18 370h4v1h-4zM17 371h2v1h-2zM21 371h2v1h-2zM22 372h1v1h-1zM16 372h2v6h-2zM22 377h1v1h-1zM17 378h2v1h-2zM21 378h2v1h-2zM18 379h4v1h-4zM24 370h2v3h-2zM30 370h2v3h-2zM25 373h2v1h-2zM29 373h2v1h-2zM26 374h4v1h-4zM27 375h2v4h-2zM26 379h4v1h-4zM35 370h1v1h-1zM34 371h3v1h-3zM33 372h2v1h-2zM36 372h2v1h-2zM32 373h2v2h-2zM37 373h2v2h-2zM32 375h7v1h-7zM32 376h2v4h-2zM37 376h2v4h-2zM40 370h2v1h-2zM40 371h3v1h-3zM45 370h2v3h-2zM40 372h4v1h-4zM40 373h7v1h-7zM43 374h4v1h-4zM44 375h3v1h-3zM40 374h2v6h-2zM45 376h2v4h-2z"/>
<path fill="#008c00" d="M241 117h5v1h-5zM240 118h2v1h-2zM245 118h2v1h-2zM240 119h7v1h-7zM240 120h2v3h-2zM245 122h2v1h-2zM241 123h5v1h-5z"/>
<path fill="#aae63c" d="M248 117h3v1h-3zM253 117h2v1h-2zM248 118h8v1h-8zM248 119h2v5h-2zM254 119h2v5h-2zM251 119h2v5h-2z"/>
<path fill="#ff6446" d="M265 114h5v1h-5zM264 115h2v1h-2zM269 115h2v3h-2zM266 118h4v1h-4zM269 119h2v4h-2zM264 122h2v1h-2zM265 123h5v1h-5z"/>
<path fill="#ffffff" d="M442 242h4v1h-4zM441 243h2v1h-2zM445 243h2v1h-2zM446 244h1v1h-1zM440 244h2v6h-2zM446 249h1v1h-1zM441 250h2v1h-2zM445 250h2v1h-2zM442 251h4v1h-4zM448 242h3v1h-3zM449 243h2v3h-2zM452 245h2v1h-2zM449 246h3v1h-3zM449 247h2v4h-2zM453 246h2v6h-2zM448 251h3v1h-3zM457 245h5v1h-5zM456 246h2v1h-2zM461 246h2v1h-2zM456 247h7v1h-7zM456 248h2v3h-2zM461 250h2v1h-2zM457 251h5v1h-5zM465 245h5v1h-5zM469 246h2v1h-2zM464 246h2v5h-2zM469 250h2v1h-2zM465 251h5v1h-5zM472 242h3v1h-3zM477 245h2v1h-2zM473 243h2v4h-2zM476 246h2v1h-2zM473 247h4v2h-4zM476 249h2v1h-2zM473 249h2v2h-2zM477 250h2v2h-2zM472 251h3v1h-3zM488 242h3v1h-3zM489 243h2v2h-2zM489 245h4v1h-4zM492 246h2v1h-2zM489 246h2v5h-2zM493 247h2v4h-2zM489 251h5v1h-5zM497 245h5v1h-5zM496 246h2v5h-2zM501 246h2v5h-2zM497 251h5v1h-5zM504 245h2v1h-2zM510 245h2v1h-2zM505 246h2v1h-2zM509 246h2v1h-2zM506 247h4v1h-4zM507 248h2v1h-2zM506 249h4v1h-4zM505 250h2v1h-2zM509 250h2v1h-2zM504 251h2v1h-2zM510 251h2v1h-2zM432 274h2v7h-2zM438 274h2v7h-2zM435 279h2v2h-2zM432 281h8v1h-8zM433 282h2v2h-2zM437 282h2v2h-2zM440 274h2v4h-2zM445 274h2v4h-2zM440 278h7v1h-7zM440 279h2v5h-2zM445 279h2v5h-2zM450 274h4v1h-4zM451 275h2v8h-2zM450 283h4v1h-4zM456 274h8v1h-8zM456 275h2v1h-2zM462 275h2v1h-2zM456 276h1v1h-1zM463 276h1v1h-1zM459 275h2v8h-2zM458 283h4v1h-4zM464 274h7v1h-7zM469 275h2v1h-2zM470 276h1v1h-1zM465 275h2v3h-2zM468 277h1v1h-1zM465 278h4v1h-4zM468 279h1v1h-1zM470 281h1v1h-1zM465 279h2v4h-2zM469 282h2v1h-2zM464 283h7v1h-7zM272 386h2v7h-2zM278 386h2v7h-2zM275 391h2v2h-2zM272 393h8v1h-8zM273 394h2v2h-2zM277 394h2v2h-2zM280 386h2v4h-2zM285 386h2v4h-2zM280 390h7v1h-7zM280 391h2v5h-2zM285 391h2v5h-2zM290 386h4v1h-4zM291 387h2v8h-2zM290 395h4v1h-4zM296 386h8v1h-8zM296 387h2v1h-2zM302 387h2v1h-2zM296 388h1v1h-1zM303 388h1v1h-1zM299 387h2v8h-2zM298 395h4v1h-4zM304 386h7v1h-7zM309 387h2v1h-2zM310 388h1v1h-1zM305 387h2v3h-2zM308 389h1v1h-1zM305 390h4v1h-4zM308 391h1v1h-1zM310 393h1v1h-1zM305 391h2v4h-2zM309 394h2v1h-2zM304 395h7v1h-7z"/>
<path fill="#ff5555" d="M16 274h6v1h-6zM17 275h2v3h-2zM21 275h2v3h-2zM17 278h5v1h-5zM20 279h2v1h-2zM17 279h2v4h-2zM21 280h2v4h-2zM16 283h3v1h-3zM24 274h7v1h-7zM29 275h2v1h-2zM30 276h1v1h-1zM25 275h2v3h-2zM28 277h1v1h-1zM25 278h4v1h-4zM28 279h1v1h-1zM30 281h1v1h-1zM25 279h2v4h-2zM29 282h2v1h-2zM24 283h7v1h-7zM32 274h5v1h-5zM36 275h2v1h-2zM37 276h2v6h-2zM33 275h2v8h-2zM36 282h2v1h-2zM32 283h5v1h-5zM16 322h6v1h-6zM17 323h2v3h-2zM21 323h2v3h-2zM17 326h5v1h-5zM20 327h2v1h-2zM17 327h2v4h-2zM21 328h2v4h-2zM16 331h3v1h-3zM24 322h7v1h-7zM29 323h2v1h-2zM30 324h1v1h-1zM25 323h2v3h-2zM28 325h1v1h-1zM25 326h4v1h-4zM28 327h1v1h-1zM30 329h1v1h-1zM25 327h2v4h-2zM29 330h2v1h-2zM24 331h7v1h-7zM32 322h5v1h-5zM36 323h2v1h-2zM37 324h2v6h-2zM33 323h2v8h-2zM36 330h2v1h-2zM32 331h5v1h-5z"/>
<path fill="#aa0000" d="M16 290h6v1h-6zM17 291h2v3h-2zM21 291h2v3h-2zM17 294h5v1h-5zM20 295h2v1h-2zM17 295h2v4h-2zM21 296h2v4h-2zM16 299h3v1h-3zM24 290h7v1h-7zM29 291h2v1h-2zM30 292h1v1h-1zM25 291h2v3h-2zM28 293h1v1h-1zM25 294h4v1h-4zM28 295h1v1h-1zM30 297h1v1h-1zM25 295h2v4h-2zM29 298h2v1h-2zM24 299h7v1h-7zM32 290h5v1h-5zM36 291h2v1h-2zM37 292h2v6h-2zM33 291h2v8h-2zM36 298h2v1h-2zM32 299h5v1h-5zM224 322h6v1h-6zM225 323h2v3h-2zM229 323h2v3h-2zM225 326h5v1h-5zM228 327h2v1h-2zM225 327h2v4h-2zM229 328h2v4h-2zM224 331h3v1h-3zM232 322h7v1h-7zM237 323h2v1h-2zM238 324h1v1h-1zM233 323h2v3h-2zM236 325h1v1h-1zM233 326h4v1h-4zM236 327h1v1h-1zM238 329h1v1h-1zM233 327h2v4h-2zM237 330h2v1h-2zM232 331h7v1h-7zM240 322h5v1h-5zM244 323h2v1h-2zM245 324h2v6h-2zM241 323h2v8h-2zM244 330h2v1h-2zM240 331h5v1h-5z"/>
<path fill="#ff55ff" d="M48 274h6v1h-6zM49 275h2v3h-2zM53 275h2v3h-2zM49 278h5v1h-5zM49 279h2v4h-2zM48 283h4v1h-4zM56 274h2v9h-2zM61 274h2v9h-2zM57 283h5v1h-5zM64 274h6v1h-6zM65 275h2v3h-2zM69 275h2v3h-2zM65 278h5v1h-5zM68 279h2v1h-2zM65 279h2v4h-2zM69 280h2v4h-2zM64 283h3v1h-3zM72 274h6v1h-6zM73 275h2v3h-2zM77 275h2v3h-2zM73 278h5v1h-5zM73 279h2v4h-2zM72 283h4v1h-4zM80 274h4v1h-4zM86 281h1v1h-1zM81 275h2v8h-2zM85 282h2v1h-2zM80 283h7v1h-7zM88 274h7v1h-7zM93 275h2v1h-2zM94 276h1v1h-1zM89 275h2v3h-2zM92 277h1v1h-1zM89 278h4v1h-4zM92 279h1v1h-1zM94 281h1v1h-1zM89 279h2v4h-2zM93 282h2v1h-2zM88 283h7v1h-7zM16 338h6v1h-6zM17 339h2v3h-2zM21 339h2v3h-2zM17 342h5v1h-5zM17 343h2v4h-2zM16 347h4v1h-4zM24 338h2v9h-2zM29 338h2v9h-2zM25 347h5v1h-5zM32 338h6v1h-6zM33 339h2v3h-2zM37 339h2v3h-2zM33 342h5v1h-5zM36 343h2v1h-2zM33 343h2v4h-2zM37 344h2v4h-2zM32 347h3v1h-3zM40 338h6v1h-6zM41 339h2v3h-2zM45 339h2v3h-2zM41 342h5v1h-5zM41 343h2v4h-2zM40 347h4v1h-4zM48 338h4v1h-4zM54 345h1v1h-1zM49 339h2v8h-2zM53 346h2v1h-2zM48 347h7v1h-7zM56 338h7v1h-7zM61 339h2v1h-2zM62 340h1v1h-1zM57 339h2v3h-2zM60 341h1v1h-1zM57 342h4v1h-4zM60 343h1v1h-1zM62 345h1v1h-1zM57 343h2v4h-2zM61 346h2v1h-2zM56 347h7v1h-7z"/>
<path fill="#aa00aa" d="M48 290h6v1h-6zM49 291h2v3h-2zM53 291h2v3h-2zM49 294h5v1h-5zM49 295h2v4h-2zM48 299h4v1h-4zM56 290h2v9h-2zM61 290h2v9h-2zM57 299h5v1h-5zM64 290h6v1h-6zM65 291h2v3h-2zM69 291h2v3h-2zM65 294h5v1h-5zM68 295h2v1h-2zM65 295h2v4h-2zM69 296h2v4h-2zM64 299h3v1h-3zM72 290h6v1h-6zM73 291h2v3h-2zM77 291h2v3h-2zM73 294h5v1h-5zM73 295h2v4h-2zM72 299h4v1h-4zM80 290h4v1h-4zM86 297h1v1h-1zM81 291h2v8h-2zM85 298h2v1h-2zM80 299h7v1h-7zM88 290h7v1h-7zM93 291h2v1h-2zM94 292h1v1h-1zM89 291h2v3h-2zM92 293h1v1h-1zM89 294h4v1h-4zM92 295h1v1h-1zM94 297h1v1h-1zM89 295h2v4h-2zM93 298h2v1h-2zM88 299h7v1h-7zM200 338h6v1h-6zM201 339h2v3h-2zM205 339h2v3h-2zM201 342h5v1h-5zM201 343h2v4h-2zM200 347h4v1h-4zM208 338h2v9h-2zM213 338h2v9h-2zM209 347h5v1h-5zM216 338h6v1h-6zM217 339h2v3h-2zM221 339h2v3h-2zM217 342h5v1h-5zM220 343h2v1h-2zM217 343h2v4h-2zM221 344h2v4h-2zM216 347h3v1h-3zM224 338h6v1h-6zM225 339h2v3h-2zM229 339h2v3h-2zM225 342h5v1h-5zM225 343h2v4h-2zM224 347h4v1h-4zM232 338h4v1h-4zM238 345h1v1h-1zM233 339h2v8h-2zM237 346h2v1h-2zM232 347h7v1h-7zM240 338h7v1h-7zM245 339h2v1h-2zM246 340h1v1h-1zM241 339h2v3h-2zM244 341h1v1h-1zM241 342h4v1h-4zM244 343h1v1h-1zM246 345h1v1h-1zM241 343h2v4h-2zM245 346h2v1h-2zM240 347h7v1h-7z"/>
<path fill="#5555ff" d="M104 274h6v1h-6zM105 275h2v3h-2zM109 275h2v3h-2zM105 278h5v1h-5zM105 279h2v4h-2zM109 279h2v4h-2zM104 283h6v1h-6zM112 274h4v1h-4zM118 281h1v1h-1zM113 275h2v8h-2zM117 282h2v1h-2zM112 283h7v1h-7zM120 274h2v9h-2zM125 274h2v9h-2zM121 283h5v1h-5zM128 274h7v1h-7zM133 275h2v1h-2zM134 276h1v1h-1zM129 275h2v3h-2zM132 277h1v1h-1zM129 278h4v1h-4zM132 279h1v1h-1zM134 281h1v1h-1zM129 279h2v4h-2zM133 282h2v1h-2zM128 283h7v1h-7zM16 354h6v1h-6zM17 355h2v3h-2zM21 355h2v3h-2zM17 358h5v1h-5zM17 359h2v4h-2zM21 359h2v4h-2zM16 363h6v1h-6zM24 354h4v1h-4zM30 361h1v1h-1zM25 355h2v8h-2zM29 362h2v1h-2zM24 363h7v1h-7zM32 354h2v9h-2zM37 354h2v9h-2zM33 363h5v1h-5zM40 354h7v1h-7zM45 355h2v1h-2zM46 356h1v1h-1zM41 355h2v3h-2zM44 357h1v1h-1zM41 358h4v1h-4zM44 359h1v1h-1zM46 361h1v1h-1zM41 359h2v4h-2zM45 362h2v1h-2zM40 363h7v1h-7z"/>
<path fill="#0000aa" d="M104 290h6v1h-6zM105 291h2v3h-2zM109 291h2v3h-2zM105 294h5v1h-5zM105 295h2v4h-2zM109 295h2v4h-2zM104 299h6v1h-6zM112 290h4v1h-4zM118 297h1v1h-1zM113 291h2v8h-2zM117 298h2v1h-2zM112 299h7v1h-7zM120 290h2v9h-2zM125 290h2v9h-2zM121 299h5v1h-5zM128 290h7v1h-7zM133 291h2v1h-2zM134 292h1v1h-1zM129 291h2v3h-2zM132 293h1v1h-1zM129 294h4v1h-4zM132 295h1v1h-1zM134 297h1v1h-1zM129 295h2v4h-2zM133 298h2v1h-2zM128 299h7v1h-7zM216 354h6v1h-6zM217 355h2v3h-2zM221 355h2v3h-2zM217 358h5v1h-5zM217 359h2v4h-2zM221 359h2v4h-2zM216 363h6v1h-6zM224 354h4v1h-4zM230 361h1v1h-1zM225 355h2v8h-2zM229 362h2v1h-2zM224 363h7v1h-7zM232 354h2v9h-2zM237 354h2v9h-2zM233 363h5v1h-5zM240 354h7v1h-7zM245 355h2v1h-2zM246 356h1v1h-1zM241 355h2v3h-2zM244 357h1v1h-1zM241 358h4v1h-4zM244 359h1v1h-1zM246 361h1v1h-1zM241 359h2v4h-2zM245 362h2v1h-2zM240 363h7v1h-7z"/>
<path fill="#00aa00" d="M186 290h4v1h-4zM185 291h2v1h-2zM189 291h2v1h-2zM190 292h1v1h-1zM187 295h4v1h-4zM184 292h2v6h-2zM189 296h2v3h-2zM185 298h2v1h-2zM186 299h3v1h-3zM190 299h1v1h-1zM192 290h6v1h-6zM193 291h2v3h-2zM197 291h2v3h-2zM193 294h5v1h-5zM196 295h2v1h-2zM193 295h2v4h-2zM197 296h2v4h-2zM192 299h3v1h-3zM200 290h7v1h-7zM205 291h2v1h-2zM206 292h1v1h-1zM201 291h2v3h-2zM204 293h1v1h-1zM201 294h4v1h-4zM204 295h1v1h-1zM206 297h1v1h-1zM201 295h2v4h-2zM205 298h2v1h-2zM200 299h7v1h-7zM208 290h7v1h-7zM213 291h2v1h-2zM214 292h1v1h-1zM209 291h2v3h-2zM212 293h1v1h-1zM209 294h4v1h-4zM212 295h1v1h-1zM214 297h1v1h-1zM209 295h2v4h-2zM213 298h2v1h-2zM208 299h7v1h-7zM216 290h2v1h-2zM216 291h3v1h-3zM221 290h2v3h-2zM216 292h4v1h-4zM216 293h7v1h-7zM219 294h4v1h-4zM220 295h3v1h-3zM216 294h2v6h-2zM221 296h2v4h-2zM210 386h4v1h-4zM209 387h2v1h-2zM213 387h2v1h-2zM214 388h1v1h-1zM211 391h4v1h-4zM208 388h2v6h-2zM213 392h2v3h-2zM209 394h2v1h-2zM210 395h3v1h-3zM214 395h1v1h-1zM216 386h6v1h-6zM217 387h2v3h-2zM221 387h2v3h-2zM217 390h5v1h-5zM220 391h2v1h-2zM217 391h2v4h-2zM221 392h2v4h-2zM216 395h3v1h-3zM224 386h7v1h-7zM229 387h2v1h-2zM230 388h1v1h-1zM225 387h2v3h-2zM228 389h1v1h-1zM225 390h4v1h-4zM228 391h1v1h-1zM230 393h1v1h-1zM225 391h2v4h-2zM229 394h2v1h-2zM224 395h7v1h-7zM232 386h7v1h-7zM237 387h2v1h-2zM238 388h1v1h-1zM233 387h2v3h-2zM236 389h1v1h-1zM233 390h4v1h-4zM236 391h1v1h-1zM238 393h1v1h-1zM233 391h2v4h-2zM237 394h2v1h-2zM232 395h7v1h-7zM240 386h2v1h-2zM240 387h3v1h-3zM245 386h2v3h-2zM240 388h4v1h-4zM240 389h7v1h-7zM243 390h4v1h-4zM244 391h3v1h-3zM240 390h2v6h-2zM245 392h2v4h-2z"/>
<path fill="#ffa500" d="M289 274h5v1h-5zM288 275h2v8h-2zM293 275h2v8h-2zM289 283h5v1h-5zM296 274h6v1h-6zM297 275h2v3h-2zM301 275h2v3h-2zM297 278h5v1h-5zM300 279h2v1h-2zM297 279h2v4h-2zM301 280h2v4h-2zM296 283h3v1h-3zM307 274h1v1h-1zM306 275h3v1h-3zM305 276h2v1h-2zM308 276h2v1h-2zM304 277h2v2h-2zM309 277h2v2h-2zM304 279h7v1h-7zM304 280h2v4h-2zM309 280h2v4h-2zM312 274h2v1h-2zM312 275h3v1h-3zM317 274h2v3h-2zM312 276h4v1h-4zM312 277h7v1h-7zM315 278h4v1h-4zM316 279h3v1h-3zM312 278h2v6h-2zM317 280h2v4h-2zM322 274h4v1h-4zM321 275h2v1h-2zM325 275h2v1h-2zM326 276h1v1h-1zM323 279h4v1h-4zM320 276h2v6h-2zM325 280h2v3h-2zM321 282h2v1h-2zM322 283h3v1h-3zM326 283h1v1h-1zM328 274h7v1h-7zM333 275h2v1h-2zM334 276h1v1h-1zM329 275h2v3h-2zM332 277h1v1h-1zM329 278h4v1h-4zM332 279h1v1h-1zM334 281h1v1h-1zM329 279h2v4h-2zM333 282h2v1h-2zM328 283h7v1h-7zM273 338h5v1h-5zM272 339h2v8h-2zM277 339h2v8h-2zM273 347h5v1h-5zM280 338h6v1h-6zM281 339h2v3h-2zM285 339h2v3h-2zM281 342h5v1h-5zM284 343h2v1h-2zM281 343h2v4h-2zM285 344h2v4h-2zM280 347h3v1h-3zM291 338h1v1h-1zM290 339h3v1h-3zM289 340h2v1h-2zM292 340h2v1h-2zM288 341h2v2h-2zM293 341h2v2h-2zM288 343h7v1h-7zM288 344h2v4h-2zM293 344h2v4h-2zM296 338h2v1h-2zM296 339h3v1h-3zM301 338h2v3h-2zM296 340h4v1h-4zM296 341h7v1h-7zM299 342h4v1h-4zM300 343h3v1h-3zM296 342h2v6h-2zM301 344h2v4h-2zM306 338h4v1h-4zM305 339h2v1h-2zM309 339h2v1h-2zM310 340h1v1h-1zM307 343h4v1h-4zM304 340h2v6h-2zM309 344h2v3h-2zM305 346h2v1h-2zM306 347h3v1h-3zM310 347h1v1h-1zM312 338h7v1h-7zM317 339h2v1h-2zM318 340h1v1h-1zM313 339h2v3h-2zM316 341h1v1h-1zM313 342h4v1h-4zM316 343h1v1h-1zM318 345h1v1h-1zM313 343h2v4h-2zM317 346h2v1h-2zM312 347h7v1h-7z"/>
<path fill="#ff8c00" d="M289 290h5v1h-5zM288 291h2v8h-2zM293 291h2v8h-2zM289 299h5v1h-5zM296 290h6v1h-6zM297 291h2v3h-2zM301 291h2v3h-2zM297 294h5v1h-5zM300 295h2v1h-2zM297 295h2v4h-2zM301 296h2v4h-2zM296 299h3v1h-3zM307 290h1v1h-1zM306 291h3v1h-3zM305 292h2v1h-2zM308 292h2v1h-2zM304 293h2v2h-2zM309 293h2v2h-2zM304 295h7v1h-7zM304 296h2v4h-2zM309 296h2v4h-2zM312 290h2v1h-2zM312 291h3v1h-3zM317 290h2v3h-2zM312 292h4v1h-4zM312 293h7v1h-7zM315 294h4v1h-4zM316 295h3v1h-3zM312 294h2v6h-2zM317 296h2v4h-2zM322 290h4v1h-4zM321 291h2v1h-2zM325 291h2v1h-2zM326 292h1v1h-1zM323 295h4v1h-4zM320 292h2v6h-2zM325 296h2v3h-2zM321 298h2v1h-2zM322 299h3v1h-3zM326 299h1v1h-1zM328 290h7v1h-7zM333 291h2v1h-2zM334 292h1v1h-1zM329 291h2v3h-2zM332 293h1v1h-1zM329 294h4v1h-4zM332 295h1v1h-1zM334 297h1v1h-1zM329 295h2v4h-2zM333 298h2v1h-2zM328 299h7v1h-7zM457 338h5v1h-5zM456 339h2v8h-2zM461 339h2v8h-2zM457 347h5v1h-5zM464 338h6v1h-6zM465 339h2v3h-2zM469 339h2v3h-2zM465 342h5v1h-5zM468 343h2v1h-2zM465 343h2v4h-2zM469 344h2v4h-2zM464 347h3v1h-3zM475 338h1v1h-1zM474 339h3v1h-3zM473 340h2v1h-2zM476 340h2v1h-2zM472 341h2v2h-2zM477 341h2v2h-2zM472 343h7v1h-7zM472 344h2v4h-2zM477 344h2v4h-2zM480 338h2v1h-2zM480 339h3v1h-3zM485 338h2v3h-2zM480 340h4v1h-4zM480 341h7v1h-7zM483 342h4v1h-4zM484 343h3v1h-3zM480 342h2v6h-2zM485 344h2v4h-2zM490 338h4v1h-4zM489 339h2v1h-2zM493 339h2v1h-2zM494 340h1v1h-1zM491 343h4v1h-4zM488 340h2v6h-2zM493 344h2v3h-2zM489 346h2v1h-2zM490 347h3v1h-3zM494 347h1v1h-1zM496 338h7v1h-7zM501 339h2v1h-2zM502 340h1v1h-1zM497 339h2v3h-2zM500 341h1v1h-1zM497 342h4v1h-4zM500 343h1v1h-1zM502 345h1v1h-1zM497 343h2v4h-2zM501 346h2v1h-2zM496 347h7v1h-7z"/>
<path fill="#aa5500" d="M344 274h6v1h-6zM345 275h2v3h-2zM349 275h2v3h-2zM345 278h5v1h-5zM345 279h2v4h-2zM349 279h2v4h-2zM344 283h6v1h-6zM352 274h6v1h-6zM353 275h2v3h-2zM357 275h2v3h-2zM353 278h5v1h-5zM356 279h2v1h-2zM353 279h2v4h-2zM357 280h2v4h-2zM352 283h3v1h-3zM361 274h5v1h-5zM360 275h2v8h-2zM365 275h2v8h-2zM361 283h5v1h-5zM368 274h2v7h-2zM374 274h2v7h-2zM371 279h2v2h-2zM368 281h8v1h-8zM369 282h2v2h-2zM373 282h2v2h-2zM376 274h2v1h-2zM376 275h3v1h-3zM381 274h2v3h-2zM376 276h4v1h-4zM376 277h7v1h-7zM379 278h4v1h-4zM380 279h3v1h-3zM376 278h2v6h-2zM381 280h2v4h-2zM272 354h6v1h-6zM273 355h2v3h-2zM277 355h2v3h-2zM273 358h5v1h-5zM273 359h2v4h-2zM277 359h2v4h-2zM272 363h6v1h-6zM280 354h6v1h-6zM281 355h2v3h-2zM285 355h2v3h-2zM281 358h5v1h-5zM284 359h2v1h-2zM281 359h2v4h-2zM285 360h2v4h-2zM280 363h3v1h-3zM289 354h5v1h-5zM288 355h2v8h-2zM293 355h2v8h-2zM289 363h5v1h-5zM296 354h2v7h-2zM302 354h2v7h-2zM299 359h2v2h-2zM296 361h8v1h-8zM297 362h2v2h-2zM301 362h2v2h-2zM304 354h2v1h-2zM304 355h3v1h-3zM309 354h2v3h-2zM304 356h4v1h-4zM304 357h7v1h-7zM307 358h4v1h-4zM308 359h3v1h-3zM304 358h2v6h-2zM309 360h2v4h-2z"/>
<path fill="#552a00" d="M344 290h6v1h-6zM345 291h2v3h-2zM349 291h2v3h-2zM345 294h5v1h-5zM345 295h2v4h-2zM349 295h2v4h-2zM344 299h6v1h-6zM352 290h6v1h-6zM353 291h2v3h-2zM357 291h2v3h-2zM353 294h5v1h-5zM356 295h2v1h-2zM353 295h2v4h-2zM357 296h2v4h-2zM352 299h3v1h-3zM361 290h5v1h-5zM360 291h2v8h-2zM365 291h2v8h-2zM361 299h5v1h-5zM368 290h2v7h-2zM374 290h2v7h-2zM371 295h2v2h-2zM368 297h8v1h-8zM369 298h2v2h-2zM373 298h2v2h-2zM376 290h2v1h-2zM376 291h3v1h-3zM381 290h2v3h-2zM376 292h4v1h-4zM376 293h7v1h-7zM379 294h4v1h-4zM380 295h3v1h-3zM376 294h2v6h-2zM381 296h2v4h-2zM464 354h6v1h-6zM465 355h2v3h-2zM469 355h2v3h-2zM465 358h5v1h-5zM465 359h2v4h-2zM469 359h2v4h-2zM464 363h6v1h-6zM472 354h6v1h-6zM473 355h2v3h-2zM477 355h2v3h-2zM473 358h5v1h-5zM476 359h2v1h-2zM473 359h2v4h-2zM477 360h2v4h-2zM472 363h3v1h-3zM481 354h5v1h-5zM480 355h2v8h-2zM485 355h2v8h-2zM481 363h5v1h-5zM488 354h2v7h-2zM494 354h2v7h-2zM491 359h2v2h-2zM488 361h8v1h-8zM489 362h2v2h-2zM493 362h2v2h-2zM496 354h2v1h-2zM496 355h3v1h-3zM501 354h2v3h-2zM496 356h4v1h-4zM496 357h7v1h-7zM499 358h4v1h-4zM500 359h3v1h-3zM496 358h2v6h-2zM501 360h2v4h-2z"/>
<path fill="#555555" d="M394 290h4v1h-4zM393 291h2v1h-2zM397 291h2v1h-2zM398 292h1v1h-1zM395 295h4v1h-4zM392 292h2v6h-2zM397 296h2v3h-2zM393 298h2v1h-2zM394 299h3v1h-3zM398 299h1v1h-1zM400 290h6v1h-6zM401 291h2v3h-2zM405 291h2v3h-2zM401 294h5v1h-5zM404 295h2v1h-2zM401 295h2v4h-2zM405 296h2v4h-2zM400 299h3v1h-3zM411 290h1v1h-1zM410 291h3v1h-3zM409 292h2v1h-2zM412 292h2v1h-2zM408 293h2v2h-2zM413 293h2v2h-2zM408 295h7v1h-7zM408 296h2v4h-2zM413 296h2v4h-2zM416 290h2v3h-2zM422 290h2v3h-2zM417 293h2v1h-2zM421 293h2v1h-2zM418 294h4v1h-4zM419 295h2v4h-2zM418 299h4v1h-4zM474 370h4v1h-4zM473 371h2v1h-2zM477 371h2v1h-2zM478 372h1v1h-1zM475 375h4v1h-4zM472 372h2v6h-2zM477 376h2v3h-2zM473 378h2v1h-2zM474 379h3v1h-3zM478 379h1v1h-1zM480 370h6v1h-6zM481 371h2v3h-2zM485 371h2v3h-2zM481 374h5v1h-5zM484 375h2v1h-2zM481 375h2v4h-2zM485 376h2v4h-2zM480 379h3v1h-3zM491 370h1v1h-1zM490 371h3v1h-3zM489 372h2v1h-2zM492 372h2v1h-2zM488 373h2v2h-2zM493 373h2v2h-2zM488 375h7v1h-7zM488 376h2v4h-2zM493 376h2v4h-2zM496 370h2v3h-2zM502 370h2v3h-2zM497 373h2v1h-2zM501 373h2v1h-2zM498 374h4v1h-4zM499 375h2v4h-2zM498 379h4v1h-4z"/>
</svg>
</div>
<svg style="position:absolute;left:449px;top:282px" width="14" height="18" viewBox="0 0 14 18">
<path fill="#12b4f0" d="M1 1V13.5L4 10.6L6.6 15.8L8.7 14.8L6.3 10.2H10.6Z"/>
</svg>
</body></html>
